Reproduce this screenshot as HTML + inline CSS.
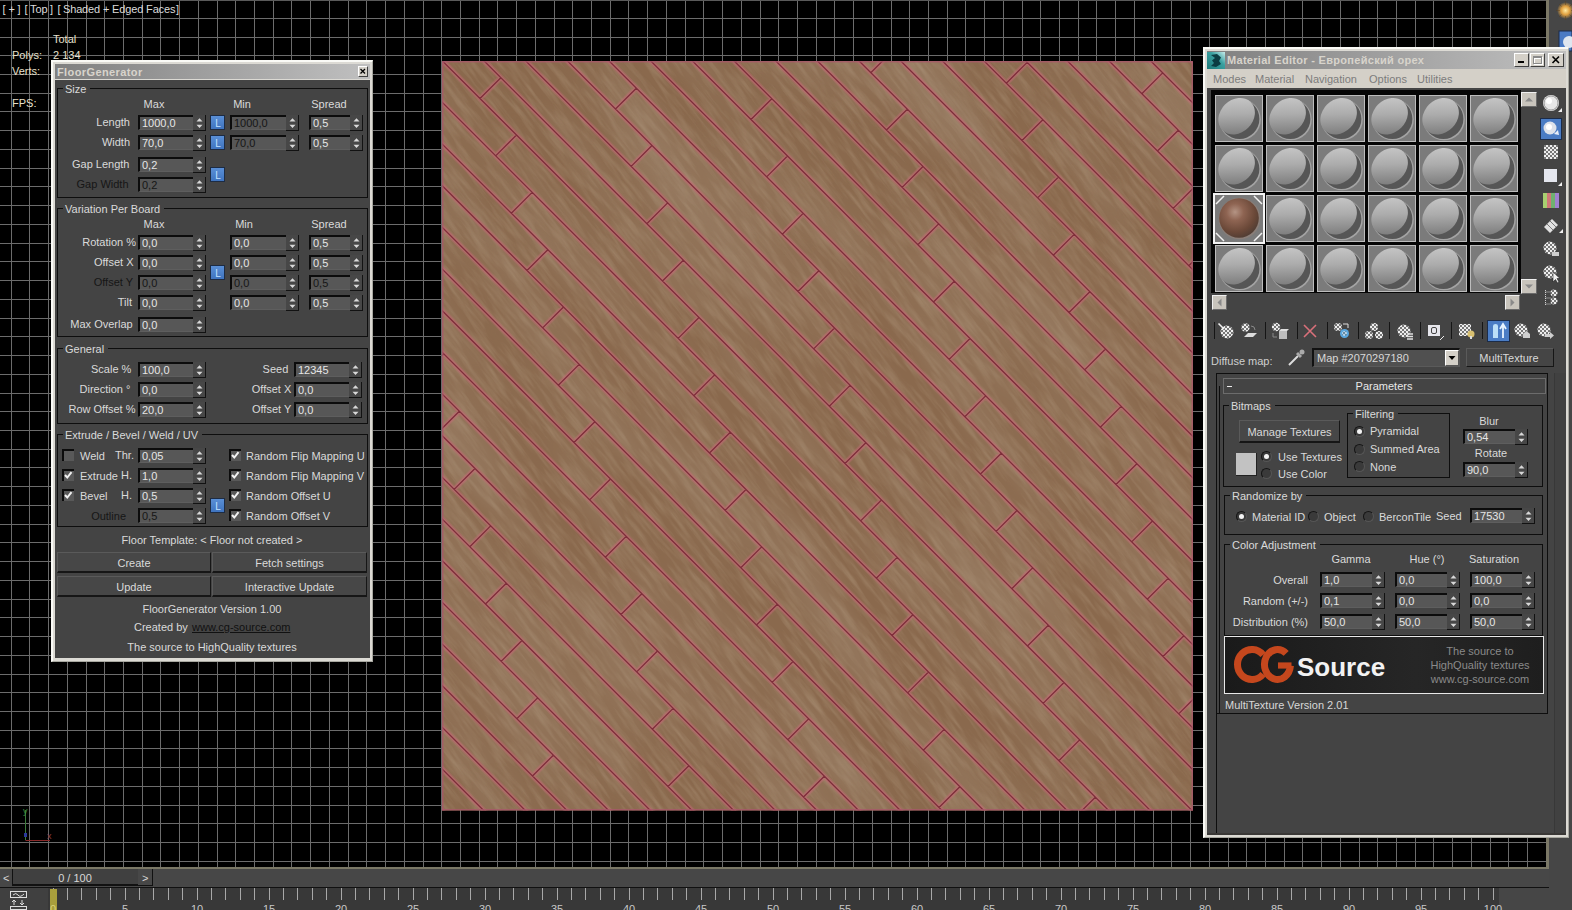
<!DOCTYPE html>
<html><head><meta charset="utf-8"><style>
html,body{margin:0;padding:0;}
body{width:1572px;height:910px;position:relative;overflow:hidden;background:#000;font-family:"Liberation Sans", sans-serif;}
body div{position:absolute;box-sizing:border-box;}
svg{position:absolute;}
</style></head><body>
<svg style="left:0;top:0" width="1546" height="867"><path d="M11.5 0V867M29.5 0V867M48.5 0V867M67.5 0V867M86.5 0V867M104.5 0V867M123.5 0V867M142.5 0V867M160.5 0V867M179.5 0V867M198.5 0V867M217.5 0V867M235.5 0V867M254.5 0V867M273.5 0V867M291.5 0V867M310.5 0V867M329.5 0V867M348.5 0V867M366.5 0V867M385.5 0V867M404.5 0V867M423.5 0V867M441.5 0V867M460.5 0V867M479.5 0V867M497.5 0V867M516.5 0V867M535.5 0V867M554.5 0V867M572.5 0V867M591.5 0V867M610.5 0V867M628.5 0V867M647.5 0V867M666.5 0V867M685.5 0V867M703.5 0V867M722.5 0V867M741.5 0V867M760.5 0V867M778.5 0V867M797.5 0V867M816.5 0V867M834.5 0V867M853.5 0V867M872.5 0V867M891.5 0V867M909.5 0V867M928.5 0V867M947.5 0V867M965.5 0V867M984.5 0V867M1003.5 0V867M1022.5 0V867M1040.5 0V867M1059.5 0V867M1078.5 0V867M1096.5 0V867M1115.5 0V867M1134.5 0V867M1153.5 0V867M1171.5 0V867M1190.5 0V867M1209.5 0V867M1228.5 0V867M1246.5 0V867M1265.5 0V867M1284.5 0V867M1302.5 0V867M1321.5 0V867M1340.5 0V867M1359.5 0V867M1377.5 0V867M1396.5 0V867M1415.5 0V867M1433.5 0V867M1452.5 0V867M1471.5 0V867M1490.5 0V867M1508.5 0V867M1527.5 0V867M0 18.5H1546M0 37.5H1546M0 55.5H1546M0 74.5H1546M0 93.5H1546M0 111.5H1546M0 130.5H1546M0 149.5H1546M0 168.5H1546M0 186.5H1546M0 205.5H1546M0 224.5H1546M0 243.5H1546M0 261.5H1546M0 280.5H1546M0 299.5H1546M0 318.5H1546M0 336.5H1546M0 355.5H1546M0 374.5H1546M0 393.5H1546M0 411.5H1546M0 430.5H1546M0 449.5H1546M0 467.5H1546M0 486.5H1546M0 505.5H1546M0 524.5H1546M0 542.5H1546M0 561.5H1546M0 580.5H1546M0 599.5H1546M0 617.5H1546M0 636.5H1546M0 655.5H1546M0 674.5H1546M0 692.5H1546M0 711.5H1546M0 730.5H1546M0 748.5H1546M0 767.5H1546M0 786.5H1546M0 805.5H1546M0 823.5H1546M0 842.5H1546M0 861.5H1546" stroke="#6c6c6c" stroke-width="1" shape-rendering="crispEdges" fill="none"/></svg><div style="left:0px;top:0px;width:1546px;height:1px;background:#5a5a5a"></div><div style="left:2.5px;top:2.19px;width:400px;height:14px;line-height:14px;font-size:11px;color:#dcdcdc;font-weight:normal;white-space:nowrap;">[</div><div style="left:8.5px;top:2.19px;width:400px;height:14px;line-height:14px;font-size:11px;color:#dcdcdc;font-weight:normal;white-space:nowrap;">+</div><div style="left:17.5px;top:2.19px;width:400px;height:14px;line-height:14px;font-size:11px;color:#dcdcdc;font-weight:normal;white-space:nowrap;">]</div><div style="left:24.5px;top:2.19px;width:400px;height:14px;line-height:14px;font-size:11px;color:#dcdcdc;font-weight:normal;white-space:nowrap;">[</div><div style="left:30px;top:2.19px;width:400px;height:14px;line-height:14px;font-size:11px;color:#dcdcdc;font-weight:normal;white-space:nowrap;">Top</div><div style="left:50px;top:2.19px;width:400px;height:14px;line-height:14px;font-size:11px;color:#dcdcdc;font-weight:normal;white-space:nowrap;">]</div><div style="left:57.5px;top:2.19px;width:400px;height:14px;line-height:14px;font-size:11px;color:#dcdcdc;font-weight:normal;white-space:nowrap;">[</div><div style="left:63px;top:2.19px;width:400px;height:14px;line-height:14px;font-size:11px;color:#dcdcdc;font-weight:normal;white-space:nowrap;letter-spacing:-0.15px;">Shaded + Edged Faces</div><div style="left:176px;top:2.19px;width:400px;height:14px;line-height:14px;font-size:11px;color:#dcdcdc;font-weight:normal;white-space:nowrap;">]</div><div style="left:53px;top:32.19px;width:400px;height:14px;line-height:14px;font-size:11px;color:#e8e0cc;font-weight:normal;white-space:nowrap;">Total</div><div style="left:12px;top:47.69px;width:400px;height:14px;line-height:14px;font-size:11px;color:#e8e0cc;font-weight:normal;white-space:nowrap;">Polys:</div><div style="left:53px;top:47.69px;width:400px;height:14px;line-height:14px;font-size:11px;color:#e8e0cc;font-weight:normal;white-space:nowrap;">2 134</div><div style="left:12px;top:63.69px;width:400px;height:14px;line-height:14px;font-size:11px;color:#e8e0cc;font-weight:normal;white-space:nowrap;">Verts:</div><div style="left:12px;top:96.19px;width:400px;height:14px;line-height:14px;font-size:11px;color:#e8e0cc;font-weight:normal;white-space:nowrap;">FPS:</div><svg style="left:18;top:800px" width="40" height="50"><path d="M7.5 10V40" stroke="#3a7a3a" stroke-width="1"/><path d="M7.5 40.5H32" stroke="#8a2a2a" stroke-width="1"/><rect x="6" y="33" width="3" height="4" fill="#2a3a9a"/></svg><div style="left:23px;top:806.38px;width:400px;height:11px;line-height:11px;font-size:9px;color:#3f8f3f;font-weight:normal;white-space:nowrap;">y</div><div style="left:47px;top:831.38px;width:400px;height:11px;line-height:11px;font-size:9px;color:#8f3f3f;font-weight:normal;white-space:nowrap;">x</div><svg style="left:442px;top:61px" width="751" height="749.5"><defs><clipPath id="sq"><rect x="0" y="0" width="751" height="749.5"/></clipPath><filter id="grain" x="0" y="0" width="100%" height="100%"><feTurbulence type="fractalNoise" baseFrequency="0.025 0.2" numOctaves="3" seed="7"/><feColorMatrix type="matrix" values="0 0 0 0 0.62  0 0 0 0 0.50  0 0 0 0 0.36  1.0 0 0 0 -0.40"/></filter><filter id="grain2" x="0" y="0" width="100%" height="100%"><feTurbulence type="fractalNoise" baseFrequency="0.004 0.02" numOctaves="2" seed="3"/><feColorMatrix type="matrix" values="0 0 0 0 0.42  0 0 0 0 0.32  0 0 0 0 0.23  1.4 0 0 0 -0.48"/></filter><filter id="lb" x="-5%" y="-5%" width="110%" height="110%"><feGaussianBlur stdDeviation="0.8"/></filter></defs><rect x="0" y="0" width="751" height="749.5" fill="#8a694d"/><g clip-path="url(#sq)"><g transform="rotate(52 375.5 374.75)"><rect x="-375.5" y="-374.75" width="1502" height="1499.0" filter="url(#grain)" opacity="0.55"/><rect x="-375.5" y="-374.75" width="1502" height="1499.0" filter="url(#grain2)" opacity="0.5"/></g><g><path d="M-20 -853.84L771 -62.84M-20 -812.17L771 -21.17M-20 -770.51L771 20.49M-20 -728.84L771 62.16M-20 -687.17L771 103.83M-20 -645.51L771 145.49M-20 -603.84L771 187.16M-20 -562.17L771 228.83M-20 -520.50L771 270.50M-20 -478.84L771 312.16M-20 -437.17L771 353.83M-20 -395.50L771 395.50M-20 -353.84L771 437.16M-20 -312.17L771 478.83M-20 -270.50L771 520.50M-20 -228.84L771 562.16M-20 -187.17L771 603.83M-20 -145.50L771 645.50M-20 -103.83L771 687.17M-20 -62.17L771 728.83M-20 -20.50L771 770.50M-20 21.17L771 812.17M-20 62.83L771 853.83M-20 104.50L771 895.50M-20 146.17L771 937.17M-20 187.84L771 978.84M-20 229.50L771 1020.50M-20 271.17L771 1062.17M-20 312.84L771 1103.84M-20 354.50L771 1145.50M-20 396.17L771 1187.17M-20 437.84L771 1228.84M-20 479.50L771 1270.50M-20 521.17L771 1312.17M-20 562.84L771 1353.84M-20 604.50L771 1395.51M-20 646.17L771 1437.17M-20 687.84L771 1478.84M-20 729.51L771 1520.51M-20 771.17L771 1562.17M-20 812.84L771 1603.84M126.98 751.52L106.14 772.36M111.32 694.18L90.48 715.02M95.65 636.85L74.81 657.69M79.98 579.52L59.14 600.36M64.32 522.18L43.48 543.02M246.82 704.68L225.98 725.52M48.65 464.85L27.81 485.69M231.15 647.35L210.31 668.19M32.98 407.51L12.14 428.36M215.49 590.01L194.65 610.85M17.32 350.18L-3.52 371.02M199.82 532.68L178.98 553.52M382.32 715.18L361.48 736.02M1.65 292.85L-19.19 313.69M184.15 475.35L163.31 496.19M366.65 657.85L345.81 678.69M168.49 418.01L147.65 438.85M350.99 600.51L330.15 621.35M152.82 360.68L131.98 381.52M335.32 543.18L314.48 564.02M517.82 725.68L496.98 746.52M137.15 303.35L116.31 324.19M319.65 485.85L298.81 506.69M502.15 668.35L481.31 689.19M121.49 246.01L100.65 266.85M303.99 428.51L283.15 449.35M486.49 611.01L465.65 631.85M105.82 188.68L84.98 209.52M288.32 371.18L267.48 392.02M470.82 553.68L449.98 574.52M653.32 736.18L632.48 757.02M90.15 131.35L69.31 152.19M272.65 313.85L251.81 334.69M455.15 496.35L434.31 517.19M637.65 678.85L616.81 699.69M74.49 74.01L53.65 94.85M256.99 256.51L236.15 277.35M439.49 439.01L418.65 459.85M621.99 621.51L601.15 642.35M58.82 16.68L37.98 37.52M241.32 199.18L220.48 220.02M423.82 381.68L402.98 402.52M606.32 564.18L585.48 585.02M225.65 141.85L204.81 162.69M408.15 324.35L387.31 345.19M590.65 506.85L569.81 527.69M773.15 689.35L752.31 710.19M209.99 84.51L189.15 105.35M392.49 267.01L371.65 287.85M574.99 449.51L554.15 470.35M757.49 632.01L736.65 652.85M194.32 27.18L173.48 48.02M376.82 209.68L355.98 230.52M559.32 392.18L538.48 413.02M741.82 574.68L720.98 595.52M361.15 152.35L340.31 173.19M543.65 334.85L522.81 355.69M726.15 517.35L705.31 538.19M345.49 95.01L324.65 115.85M527.99 277.51L507.15 298.35M710.49 460.01L689.65 480.85M329.82 37.68L308.98 58.52M512.32 220.18L491.48 241.02M694.82 402.68L673.98 423.52M314.15 -19.65L293.31 1.19M496.65 162.85L475.81 183.69M679.15 345.35L658.31 366.19M480.99 105.51L460.15 126.35M663.49 288.01L642.65 308.85M465.32 48.18L444.48 69.02M647.82 230.68L626.98 251.52M449.66 -9.16L428.81 11.68M632.16 173.34L611.32 194.18M616.49 116.01L595.65 136.85M600.82 58.68L579.98 79.52M585.16 1.34L564.32 22.18M767.66 183.84L746.82 204.68M751.99 126.51L731.15 147.35M736.32 69.18L715.48 90.02M720.66 11.84L699.82 32.68" stroke="#c46e76" stroke-width="6" opacity="0.3" fill="none"/><path d="M-20 -853.84L771 -62.84M-20 -812.17L771 -21.17M-20 -770.51L771 20.49M-20 -728.84L771 62.16M-20 -687.17L771 103.83M-20 -645.51L771 145.49M-20 -603.84L771 187.16M-20 -562.17L771 228.83M-20 -520.50L771 270.50M-20 -478.84L771 312.16M-20 -437.17L771 353.83M-20 -395.50L771 395.50M-20 -353.84L771 437.16M-20 -312.17L771 478.83M-20 -270.50L771 520.50M-20 -228.84L771 562.16M-20 -187.17L771 603.83M-20 -145.50L771 645.50M-20 -103.83L771 687.17M-20 -62.17L771 728.83M-20 -20.50L771 770.50M-20 21.17L771 812.17M-20 62.83L771 853.83M-20 104.50L771 895.50M-20 146.17L771 937.17M-20 187.84L771 978.84M-20 229.50L771 1020.50M-20 271.17L771 1062.17M-20 312.84L771 1103.84M-20 354.50L771 1145.50M-20 396.17L771 1187.17M-20 437.84L771 1228.84M-20 479.50L771 1270.50M-20 521.17L771 1312.17M-20 562.84L771 1353.84M-20 604.50L771 1395.51M-20 646.17L771 1437.17M-20 687.84L771 1478.84M-20 729.51L771 1520.51M-20 771.17L771 1562.17M-20 812.84L771 1603.84M126.98 751.52L106.14 772.36M111.32 694.18L90.48 715.02M95.65 636.85L74.81 657.69M79.98 579.52L59.14 600.36M64.32 522.18L43.48 543.02M246.82 704.68L225.98 725.52M48.65 464.85L27.81 485.69M231.15 647.35L210.31 668.19M32.98 407.51L12.14 428.36M215.49 590.01L194.65 610.85M17.32 350.18L-3.52 371.02M199.82 532.68L178.98 553.52M382.32 715.18L361.48 736.02M1.65 292.85L-19.19 313.69M184.15 475.35L163.31 496.19M366.65 657.85L345.81 678.69M168.49 418.01L147.65 438.85M350.99 600.51L330.15 621.35M152.82 360.68L131.98 381.52M335.32 543.18L314.48 564.02M517.82 725.68L496.98 746.52M137.15 303.35L116.31 324.19M319.65 485.85L298.81 506.69M502.15 668.35L481.31 689.19M121.49 246.01L100.65 266.85M303.99 428.51L283.15 449.35M486.49 611.01L465.65 631.85M105.82 188.68L84.98 209.52M288.32 371.18L267.48 392.02M470.82 553.68L449.98 574.52M653.32 736.18L632.48 757.02M90.15 131.35L69.31 152.19M272.65 313.85L251.81 334.69M455.15 496.35L434.31 517.19M637.65 678.85L616.81 699.69M74.49 74.01L53.65 94.85M256.99 256.51L236.15 277.35M439.49 439.01L418.65 459.85M621.99 621.51L601.15 642.35M58.82 16.68L37.98 37.52M241.32 199.18L220.48 220.02M423.82 381.68L402.98 402.52M606.32 564.18L585.48 585.02M225.65 141.85L204.81 162.69M408.15 324.35L387.31 345.19M590.65 506.85L569.81 527.69M773.15 689.35L752.31 710.19M209.99 84.51L189.15 105.35M392.49 267.01L371.65 287.85M574.99 449.51L554.15 470.35M757.49 632.01L736.65 652.85M194.32 27.18L173.48 48.02M376.82 209.68L355.98 230.52M559.32 392.18L538.48 413.02M741.82 574.68L720.98 595.52M361.15 152.35L340.31 173.19M543.65 334.85L522.81 355.69M726.15 517.35L705.31 538.19M345.49 95.01L324.65 115.85M527.99 277.51L507.15 298.35M710.49 460.01L689.65 480.85M329.82 37.68L308.98 58.52M512.32 220.18L491.48 241.02M694.82 402.68L673.98 423.52M314.15 -19.65L293.31 1.19M496.65 162.85L475.81 183.69M679.15 345.35L658.31 366.19M480.99 105.51L460.15 126.35M663.49 288.01L642.65 308.85M465.32 48.18L444.48 69.02M647.82 230.68L626.98 251.52M449.66 -9.16L428.81 11.68M632.16 173.34L611.32 194.18M616.49 116.01L595.65 136.85M600.82 58.68L579.98 79.52M585.16 1.34L564.32 22.18M767.66 183.84L746.82 204.68M751.99 126.51L731.15 147.35M736.32 69.18L715.48 90.02M720.66 11.84L699.82 32.68" stroke="#c06a74" stroke-width="3.6" opacity="0.58" fill="none"/><path d="M-20 -853.84L771 -62.84M-20 -812.17L771 -21.17M-20 -770.51L771 20.49M-20 -728.84L771 62.16M-20 -687.17L771 103.83M-20 -645.51L771 145.49M-20 -603.84L771 187.16M-20 -562.17L771 228.83M-20 -520.50L771 270.50M-20 -478.84L771 312.16M-20 -437.17L771 353.83M-20 -395.50L771 395.50M-20 -353.84L771 437.16M-20 -312.17L771 478.83M-20 -270.50L771 520.50M-20 -228.84L771 562.16M-20 -187.17L771 603.83M-20 -145.50L771 645.50M-20 -103.83L771 687.17M-20 -62.17L771 728.83M-20 -20.50L771 770.50M-20 21.17L771 812.17M-20 62.83L771 853.83M-20 104.50L771 895.50M-20 146.17L771 937.17M-20 187.84L771 978.84M-20 229.50L771 1020.50M-20 271.17L771 1062.17M-20 312.84L771 1103.84M-20 354.50L771 1145.50M-20 396.17L771 1187.17M-20 437.84L771 1228.84M-20 479.50L771 1270.50M-20 521.17L771 1312.17M-20 562.84L771 1353.84M-20 604.50L771 1395.51M-20 646.17L771 1437.17M-20 687.84L771 1478.84M-20 729.51L771 1520.51M-20 771.17L771 1562.17M-20 812.84L771 1603.84M126.98 751.52L106.14 772.36M111.32 694.18L90.48 715.02M95.65 636.85L74.81 657.69M79.98 579.52L59.14 600.36M64.32 522.18L43.48 543.02M246.82 704.68L225.98 725.52M48.65 464.85L27.81 485.69M231.15 647.35L210.31 668.19M32.98 407.51L12.14 428.36M215.49 590.01L194.65 610.85M17.32 350.18L-3.52 371.02M199.82 532.68L178.98 553.52M382.32 715.18L361.48 736.02M1.65 292.85L-19.19 313.69M184.15 475.35L163.31 496.19M366.65 657.85L345.81 678.69M168.49 418.01L147.65 438.85M350.99 600.51L330.15 621.35M152.82 360.68L131.98 381.52M335.32 543.18L314.48 564.02M517.82 725.68L496.98 746.52M137.15 303.35L116.31 324.19M319.65 485.85L298.81 506.69M502.15 668.35L481.31 689.19M121.49 246.01L100.65 266.85M303.99 428.51L283.15 449.35M486.49 611.01L465.65 631.85M105.82 188.68L84.98 209.52M288.32 371.18L267.48 392.02M470.82 553.68L449.98 574.52M653.32 736.18L632.48 757.02M90.15 131.35L69.31 152.19M272.65 313.85L251.81 334.69M455.15 496.35L434.31 517.19M637.65 678.85L616.81 699.69M74.49 74.01L53.65 94.85M256.99 256.51L236.15 277.35M439.49 439.01L418.65 459.85M621.99 621.51L601.15 642.35M58.82 16.68L37.98 37.52M241.32 199.18L220.48 220.02M423.82 381.68L402.98 402.52M606.32 564.18L585.48 585.02M225.65 141.85L204.81 162.69M408.15 324.35L387.31 345.19M590.65 506.85L569.81 527.69M773.15 689.35L752.31 710.19M209.99 84.51L189.15 105.35M392.49 267.01L371.65 287.85M574.99 449.51L554.15 470.35M757.49 632.01L736.65 652.85M194.32 27.18L173.48 48.02M376.82 209.68L355.98 230.52M559.32 392.18L538.48 413.02M741.82 574.68L720.98 595.52M361.15 152.35L340.31 173.19M543.65 334.85L522.81 355.69M726.15 517.35L705.31 538.19M345.49 95.01L324.65 115.85M527.99 277.51L507.15 298.35M710.49 460.01L689.65 480.85M329.82 37.68L308.98 58.52M512.32 220.18L491.48 241.02M694.82 402.68L673.98 423.52M314.15 -19.65L293.31 1.19M496.65 162.85L475.81 183.69M679.15 345.35L658.31 366.19M480.99 105.51L460.15 126.35M663.49 288.01L642.65 308.85M465.32 48.18L444.48 69.02M647.82 230.68L626.98 251.52M449.66 -9.16L428.81 11.68M632.16 173.34L611.32 194.18M616.49 116.01L595.65 136.85M600.82 58.68L579.98 79.52M585.16 1.34L564.32 22.18M767.66 183.84L746.82 204.68M751.99 126.51L731.15 147.35M736.32 69.18L715.48 90.02M720.66 11.84L699.82 32.68" stroke="#7e2e3a" stroke-width="1.3" fill="none"/></g></g><rect x="0.75" y="0.75" width="749.5" height="748.0" fill="none" stroke="#a8586a" stroke-width="1.5" opacity="0.8"/></svg><div style="left:1546px;top:0px;width:3px;height:869px;background:#7b7866"></div><div style="left:0px;top:867px;width:1549px;height:2px;background:#7b7866"></div><div style="left:1549px;top:0px;width:23px;height:888px;background:#464646"></div><svg style="left:1549px;top:0" width="23" height="60"><defs><radialGradient id="sun"><stop offset="0" stop-color="#ffe9a0"/><stop offset="0.5" stop-color="#e0a040"/><stop offset="1" stop-color="#e0a040" stop-opacity="0"/></radialGradient></defs><circle cx="16.5" cy="10.5" r="8.5" fill="url(#sun)"/><path d="M16.5 1V5M16.5 16V20M7 10.5H11M22 10.5H26M10 4L12.5 6.5M20.5 14.5L23 17M23 4L20.5 6.5M12.5 14.5L10 17" stroke="#5a4020" stroke-width="0.8" opacity="0.6"/><rect x="10" y="31" width="13" height="20" fill="#4a7ac4" stroke="#1a2a4a"/><circle cx="20" cy="42" r="6" fill="#dfe6ef"/></svg><div style="left:0px;top:869px;width:1549px;height:19px;background:#474747"></div><div style="left:12px;top:869px;width:1px;height:17px;background:#111"></div><div style="left:13px;top:869px;width:125px;height:16px;background:#404040"></div><div style="left:13px;top:884px;width:125px;height:2px;background:#111"></div><div style="left:138px;top:869px;width:15px;height:17px;background:#474747;border-right:1px solid #111;border-bottom:1px solid #111"></div><div style="left:3px;top:871.19px;width:400px;height:14px;line-height:14px;font-size:11px;color:#d8d8d8;font-weight:normal;white-space:nowrap;">&lt;</div><div style="left:15.0px;top:871.19px;width:120px;height:14px;line-height:14px;font-size:11px;color:#d8d8d8;font-weight:normal;white-space:nowrap;text-align:center;">0 / 100</div><div style="left:142px;top:871.19px;width:400px;height:14px;line-height:14px;font-size:11px;color:#d8d8d8;font-weight:normal;white-space:nowrap;">&gt;</div><div style="left:0px;top:887px;width:1549px;height:1px;background:#111"></div><div style="left:0px;top:888px;width:1572px;height:22px;background:#464646"></div><div style="left:0px;top:888px;width:48px;height:22px;background:#404040"></div><div style="left:48px;top:888px;width:1451px;height:22px;background:#383838"></div><svg style="left:0;top:0" width="1572" height="910"><path d="M53.5 888V900M67.5 888V900M81.5 888V900M96.5 888V900M110.5 888V900M125.5 888V900M139.5 888V900M153.5 888V900M168.5 888V900M182.5 888V900M197.5 888V900M211.5 888V900M225.5 888V900M240.5 888V900M254.5 888V900M269.5 888V900M283.5 888V900M297.5 888V900M312.5 888V900M326.5 888V900M341.5 888V900M355.5 888V900M369.5 888V900M384.5 888V900M398.5 888V900M413.5 888V900M427.5 888V900M441.5 888V900M456.5 888V900M470.5 888V900M485.5 888V900M499.5 888V900M513.5 888V900M528.5 888V900M542.5 888V900M557.5 888V900M571.5 888V900M585.5 888V900M600.5 888V900M614.5 888V900M629.5 888V900M643.5 888V900M657.5 888V900M672.5 888V900M686.5 888V900M701.5 888V900M715.5 888V900M729.5 888V900M744.5 888V900M758.5 888V900M773.5 888V900M787.5 888V900M801.5 888V900M816.5 888V900M830.5 888V900M845.5 888V900M859.5 888V900M873.5 888V900M888.5 888V900M902.5 888V900M917.5 888V900M931.5 888V900M945.5 888V900M960.5 888V900M974.5 888V900M989.5 888V900M1003.5 888V900M1017.5 888V900M1032.5 888V900M1046.5 888V900M1061.5 888V900M1075.5 888V900M1089.5 888V900M1104.5 888V900M1118.5 888V900M1133.5 888V900M1147.5 888V900M1161.5 888V900M1176.5 888V900M1190.5 888V900M1205.5 888V900M1219.5 888V900M1233.5 888V900M1248.5 888V900M1262.5 888V900M1277.5 888V900M1291.5 888V900M1305.5 888V900M1320.5 888V900M1334.5 888V900M1349.5 888V900M1363.5 888V900M1377.5 888V900M1392.5 888V900M1406.5 888V900M1421.5 888V900M1435.5 888V900M1449.5 888V900M1464.5 888V900M1478.5 888V900M1493.5 888V900" stroke="#a8a8a8" stroke-width="1" shape-rendering="crispEdges"/></svg><div style="left:50px;top:889px;width:7px;height:21px;background:#a89e3c"></div><div style="left:33.0px;top:902.19px;width:40px;height:14px;line-height:14px;font-size:11px;color:#d8d27a;font-weight:normal;white-space:nowrap;text-align:center;">0</div><div style="left:105.0px;top:902.19px;width:40px;height:14px;line-height:14px;font-size:11px;color:#c8c8c8;font-weight:normal;white-space:nowrap;text-align:center;">5</div><div style="left:177.0px;top:902.19px;width:40px;height:14px;line-height:14px;font-size:11px;color:#c8c8c8;font-weight:normal;white-space:nowrap;text-align:center;">10</div><div style="left:249.0px;top:902.19px;width:40px;height:14px;line-height:14px;font-size:11px;color:#c8c8c8;font-weight:normal;white-space:nowrap;text-align:center;">15</div><div style="left:321.0px;top:902.19px;width:40px;height:14px;line-height:14px;font-size:11px;color:#c8c8c8;font-weight:normal;white-space:nowrap;text-align:center;">20</div><div style="left:393.0px;top:902.19px;width:40px;height:14px;line-height:14px;font-size:11px;color:#c8c8c8;font-weight:normal;white-space:nowrap;text-align:center;">25</div><div style="left:465.0px;top:902.19px;width:40px;height:14px;line-height:14px;font-size:11px;color:#c8c8c8;font-weight:normal;white-space:nowrap;text-align:center;">30</div><div style="left:537.0px;top:902.19px;width:40px;height:14px;line-height:14px;font-size:11px;color:#c8c8c8;font-weight:normal;white-space:nowrap;text-align:center;">35</div><div style="left:609.0px;top:902.19px;width:40px;height:14px;line-height:14px;font-size:11px;color:#c8c8c8;font-weight:normal;white-space:nowrap;text-align:center;">40</div><div style="left:681.0px;top:902.19px;width:40px;height:14px;line-height:14px;font-size:11px;color:#c8c8c8;font-weight:normal;white-space:nowrap;text-align:center;">45</div><div style="left:753.0px;top:902.19px;width:40px;height:14px;line-height:14px;font-size:11px;color:#c8c8c8;font-weight:normal;white-space:nowrap;text-align:center;">50</div><div style="left:825.0px;top:902.19px;width:40px;height:14px;line-height:14px;font-size:11px;color:#c8c8c8;font-weight:normal;white-space:nowrap;text-align:center;">55</div><div style="left:897.0px;top:902.19px;width:40px;height:14px;line-height:14px;font-size:11px;color:#c8c8c8;font-weight:normal;white-space:nowrap;text-align:center;">60</div><div style="left:969.0px;top:902.19px;width:40px;height:14px;line-height:14px;font-size:11px;color:#c8c8c8;font-weight:normal;white-space:nowrap;text-align:center;">65</div><div style="left:1041.0px;top:902.19px;width:40px;height:14px;line-height:14px;font-size:11px;color:#c8c8c8;font-weight:normal;white-space:nowrap;text-align:center;">70</div><div style="left:1113.0px;top:902.19px;width:40px;height:14px;line-height:14px;font-size:11px;color:#c8c8c8;font-weight:normal;white-space:nowrap;text-align:center;">75</div><div style="left:1185.0px;top:902.19px;width:40px;height:14px;line-height:14px;font-size:11px;color:#c8c8c8;font-weight:normal;white-space:nowrap;text-align:center;">80</div><div style="left:1257.0px;top:902.19px;width:40px;height:14px;line-height:14px;font-size:11px;color:#c8c8c8;font-weight:normal;white-space:nowrap;text-align:center;">85</div><div style="left:1329.0px;top:902.19px;width:40px;height:14px;line-height:14px;font-size:11px;color:#c8c8c8;font-weight:normal;white-space:nowrap;text-align:center;">90</div><div style="left:1401.0px;top:902.19px;width:40px;height:14px;line-height:14px;font-size:11px;color:#c8c8c8;font-weight:normal;white-space:nowrap;text-align:center;">95</div><div style="left:1473.0px;top:902.19px;width:40px;height:14px;line-height:14px;font-size:11px;color:#c8c8c8;font-weight:normal;white-space:nowrap;text-align:center;">100</div><svg style="left:9px;top:891px" width="20" height="19"><rect x="1.5" y="0.5" width="16" height="6" fill="none" stroke="#ddd"/><path d="M4 4 Q7 1 9 4 T15 3" stroke="#ddd" fill="none"/><path d="M5 14V9M3 11L5 9L7 11M13 9V14M11 12L13 14L15 12" stroke="#ddd" fill="none"/><rect x="1.5" y="15.5" width="16" height="3" fill="none" stroke="#ddd"/></svg><div style="left:51px;top:60px;width:322px;height:602px;background:#dcdad4;border-top:2px solid #fafaf6;border-left:2px solid #fafaf6;border-right:1px solid #a8a8a0;border-bottom:1px solid #a8a8a0"></div><div style="left:55px;top:64px;width:315px;height:15px;background:linear-gradient(90deg,#808080,#c0c0c0)"></div><div style="left:57px;top:64.69px;width:400px;height:14px;line-height:14px;font-size:11px;color:#d8d4cc;font-weight:bold;white-space:nowrap;letter-spacing:0.4px;">FloorGenerator</div><div style="left:358px;top:66px;width:10px;height:11px;background:#d4d0c8;border-top:1px solid #fff;border-left:1px solid #fff;border-right:1px solid #404040;border-bottom:1px solid #404040"></div><svg style="left:358px;top:66px" width="10" height="11"><path d="M2.5 3L7 7.5M7 3L2.5 7.5" stroke="#000" stroke-width="1.3"/></svg><div style="left:55px;top:80px;width:315px;height:578px;background:#444444"></div><div style="left:57px;top:88px;width:311px;height:110px;border:1px solid #0e0e0e"></div><div style="left:63px;top:86px;width:27.40625px;height:5px;background:#444444"></div><div style="left:65px;top:81.69px;width:400px;height:14px;line-height:14px;font-size:11px;color:#dadada;font-weight:normal;white-space:nowrap;">Size</div><div style="left:124.0px;top:97.19px;width:60px;height:14px;line-height:14px;font-size:11px;color:#dadada;font-weight:normal;white-space:nowrap;text-align:center;">Max</div><div style="left:212.0px;top:97.19px;width:60px;height:14px;line-height:14px;font-size:11px;color:#dadada;font-weight:normal;white-space:nowrap;text-align:center;">Min</div><div style="left:299.0px;top:97.19px;width:60px;height:14px;line-height:14px;font-size:11px;color:#dadada;font-weight:normal;white-space:nowrap;text-align:center;">Spread</div><div style="left:30px;top:115.19px;width:100px;height:14px;line-height:14px;font-size:11px;color:#dadada;font-weight:normal;white-space:nowrap;text-align:right;">Length</div><div style="left:138px;top:115px;width:55px;height:15px;background:#575757;border-top:2px solid #0c0c0c;border-left:2px solid #0c0c0c;border-bottom:1px solid #5e5e5e"></div><div style="left:193px;top:115px;width:13px;height:16px;background:#474747;border-right:1px solid #121212;border-bottom:1px solid #121212"></div><svg style="left:193px;top:115px" width="13" height="16"><path d="M3.5 6.4L6.5 3.2L9.5 6.4ZM3.5 9.8L6.5 13L9.5 9.8Z" fill="#d8d8d8"/></svg><div style="left:142px;top:116.19px;width:400px;height:14px;line-height:14px;font-size:11px;color:#e6e6e6;font-weight:normal;white-space:nowrap;">1000,0</div><div style="left:210px;top:115px;width:15px;height:15px;background:linear-gradient(#5a8fd6,#3f74bf);border:1px solid #1d2c44"></div><div style="left:208.0px;top:118.03px;width:20px;height:12px;line-height:12px;font-size:10px;color:#c4e2ff;font-weight:normal;white-space:nowrap;text-align:center;">L</div><div style="left:230px;top:115px;width:56px;height:15px;background:#575757;border-top:2px solid #0c0c0c;border-left:2px solid #0c0c0c;border-bottom:1px solid #5e5e5e"></div><div style="left:286px;top:115px;width:13px;height:16px;background:#474747;border-right:1px solid #121212;border-bottom:1px solid #121212"></div><svg style="left:286px;top:115px" width="13" height="16"><path d="M3.5 6.4L6.5 3.2L9.5 6.4ZM3.5 9.8L6.5 13L9.5 9.8Z" fill="#d8d8d8"/></svg><div style="left:234px;top:116.19px;width:400px;height:14px;line-height:14px;font-size:11px;color:#161616;font-weight:normal;white-space:nowrap;">1000,0</div><div style="left:309px;top:115px;width:41px;height:15px;background:#575757;border-top:2px solid #0c0c0c;border-left:2px solid #0c0c0c;border-bottom:1px solid #5e5e5e"></div><div style="left:350px;top:115px;width:13px;height:16px;background:#474747;border-right:1px solid #121212;border-bottom:1px solid #121212"></div><svg style="left:350px;top:115px" width="13" height="16"><path d="M3.5 6.4L6.5 3.2L9.5 6.4ZM3.5 9.8L6.5 13L9.5 9.8Z" fill="#d8d8d8"/></svg><div style="left:313px;top:116.19px;width:400px;height:14px;line-height:14px;font-size:11px;color:#e6e6e6;font-weight:normal;white-space:nowrap;">0,5</div><div style="left:30px;top:135.19px;width:100px;height:14px;line-height:14px;font-size:11px;color:#dadada;font-weight:normal;white-space:nowrap;text-align:right;">Width</div><div style="left:138px;top:135px;width:55px;height:15px;background:#575757;border-top:2px solid #0c0c0c;border-left:2px solid #0c0c0c;border-bottom:1px solid #5e5e5e"></div><div style="left:193px;top:135px;width:13px;height:16px;background:#474747;border-right:1px solid #121212;border-bottom:1px solid #121212"></div><svg style="left:193px;top:135px" width="13" height="16"><path d="M3.5 6.4L6.5 3.2L9.5 6.4ZM3.5 9.8L6.5 13L9.5 9.8Z" fill="#d8d8d8"/></svg><div style="left:142px;top:136.19px;width:400px;height:14px;line-height:14px;font-size:11px;color:#e6e6e6;font-weight:normal;white-space:nowrap;">70,0</div><div style="left:210px;top:135px;width:15px;height:15px;background:linear-gradient(#5a8fd6,#3f74bf);border:1px solid #1d2c44"></div><div style="left:208.0px;top:138.03px;width:20px;height:12px;line-height:12px;font-size:10px;color:#c4e2ff;font-weight:normal;white-space:nowrap;text-align:center;">L</div><div style="left:230px;top:135px;width:56px;height:15px;background:#575757;border-top:2px solid #0c0c0c;border-left:2px solid #0c0c0c;border-bottom:1px solid #5e5e5e"></div><div style="left:286px;top:135px;width:13px;height:16px;background:#474747;border-right:1px solid #121212;border-bottom:1px solid #121212"></div><svg style="left:286px;top:135px" width="13" height="16"><path d="M3.5 6.4L6.5 3.2L9.5 6.4ZM3.5 9.8L6.5 13L9.5 9.8Z" fill="#d8d8d8"/></svg><div style="left:234px;top:136.19px;width:400px;height:14px;line-height:14px;font-size:11px;color:#161616;font-weight:normal;white-space:nowrap;">70,0</div><div style="left:309px;top:135px;width:41px;height:15px;background:#575757;border-top:2px solid #0c0c0c;border-left:2px solid #0c0c0c;border-bottom:1px solid #5e5e5e"></div><div style="left:350px;top:135px;width:13px;height:16px;background:#474747;border-right:1px solid #121212;border-bottom:1px solid #121212"></div><svg style="left:350px;top:135px" width="13" height="16"><path d="M3.5 6.4L6.5 3.2L9.5 6.4ZM3.5 9.8L6.5 13L9.5 9.8Z" fill="#d8d8d8"/></svg><div style="left:313px;top:136.19px;width:400px;height:14px;line-height:14px;font-size:11px;color:#e6e6e6;font-weight:normal;white-space:nowrap;">0,5</div><div style="left:29.5px;top:157.19px;width:100px;height:14px;line-height:14px;font-size:11px;color:#dadada;font-weight:normal;white-space:nowrap;text-align:right;">Gap Length</div><div style="left:138px;top:157px;width:55px;height:15px;background:#575757;border-top:2px solid #0c0c0c;border-left:2px solid #0c0c0c;border-bottom:1px solid #5e5e5e"></div><div style="left:193px;top:157px;width:13px;height:16px;background:#474747;border-right:1px solid #121212;border-bottom:1px solid #121212"></div><svg style="left:193px;top:157px" width="13" height="16"><path d="M3.5 6.4L6.5 3.2L9.5 6.4ZM3.5 9.8L6.5 13L9.5 9.8Z" fill="#d8d8d8"/></svg><div style="left:142px;top:158.19px;width:400px;height:14px;line-height:14px;font-size:11px;color:#e6e6e6;font-weight:normal;white-space:nowrap;">0,2</div><div style="left:28.5px;top:177.19px;width:100px;height:14px;line-height:14px;font-size:11px;color:#161616;font-weight:normal;white-space:nowrap;text-align:right;">Gap Width</div><div style="left:138px;top:177px;width:55px;height:15px;background:#575757;border-top:2px solid #0c0c0c;border-left:2px solid #0c0c0c;border-bottom:1px solid #5e5e5e"></div><div style="left:193px;top:177px;width:13px;height:16px;background:#474747;border-right:1px solid #121212;border-bottom:1px solid #121212"></div><svg style="left:193px;top:177px" width="13" height="16"><path d="M3.5 6.4L6.5 3.2L9.5 6.4ZM3.5 9.8L6.5 13L9.5 9.8Z" fill="#d8d8d8"/></svg><div style="left:142px;top:178.19px;width:400px;height:14px;line-height:14px;font-size:11px;color:#161616;font-weight:normal;white-space:nowrap;">0,2</div><div style="left:210px;top:167px;width:15px;height:15px;background:linear-gradient(#5a8fd6,#3f74bf);border:1px solid #1d2c44"></div><div style="left:208.0px;top:170.03px;width:20px;height:12px;line-height:12px;font-size:10px;color:#c4e2ff;font-weight:normal;white-space:nowrap;text-align:center;">L</div><div style="left:57px;top:208px;width:311px;height:129px;border:1px solid #0e0e0e"></div><div style="left:63px;top:206px;width:101.25px;height:5px;background:#444444"></div><div style="left:65px;top:201.69px;width:400px;height:14px;line-height:14px;font-size:11px;color:#dadada;font-weight:normal;white-space:nowrap;">Variation Per Board</div><div style="left:124.0px;top:217.19px;width:60px;height:14px;line-height:14px;font-size:11px;color:#dadada;font-weight:normal;white-space:nowrap;text-align:center;">Max</div><div style="left:214.0px;top:217.19px;width:60px;height:14px;line-height:14px;font-size:11px;color:#dadada;font-weight:normal;white-space:nowrap;text-align:center;">Min</div><div style="left:299.0px;top:217.19px;width:60px;height:14px;line-height:14px;font-size:11px;color:#dadada;font-weight:normal;white-space:nowrap;text-align:center;">Spread</div><div style="left:36px;top:235.19px;width:100px;height:14px;line-height:14px;font-size:11px;color:#dadada;font-weight:normal;white-space:nowrap;text-align:right;">Rotation %</div><div style="left:138px;top:235px;width:55px;height:15px;background:#575757;border-top:2px solid #0c0c0c;border-left:2px solid #0c0c0c;border-bottom:1px solid #5e5e5e"></div><div style="left:193px;top:235px;width:13px;height:16px;background:#474747;border-right:1px solid #121212;border-bottom:1px solid #121212"></div><svg style="left:193px;top:235px" width="13" height="16"><path d="M3.5 6.4L6.5 3.2L9.5 6.4ZM3.5 9.8L6.5 13L9.5 9.8Z" fill="#d8d8d8"/></svg><div style="left:142px;top:236.19px;width:400px;height:14px;line-height:14px;font-size:11px;color:#e6e6e6;font-weight:normal;white-space:nowrap;">0,0</div><div style="left:230px;top:235px;width:56px;height:15px;background:#575757;border-top:2px solid #0c0c0c;border-left:2px solid #0c0c0c;border-bottom:1px solid #5e5e5e"></div><div style="left:286px;top:235px;width:13px;height:16px;background:#474747;border-right:1px solid #121212;border-bottom:1px solid #121212"></div><svg style="left:286px;top:235px" width="13" height="16"><path d="M3.5 6.4L6.5 3.2L9.5 6.4ZM3.5 9.8L6.5 13L9.5 9.8Z" fill="#d8d8d8"/></svg><div style="left:234px;top:236.19px;width:400px;height:14px;line-height:14px;font-size:11px;color:#e6e6e6;font-weight:normal;white-space:nowrap;">0,0</div><div style="left:309px;top:235px;width:41px;height:15px;background:#575757;border-top:2px solid #0c0c0c;border-left:2px solid #0c0c0c;border-bottom:1px solid #5e5e5e"></div><div style="left:350px;top:235px;width:13px;height:16px;background:#474747;border-right:1px solid #121212;border-bottom:1px solid #121212"></div><svg style="left:350px;top:235px" width="13" height="16"><path d="M3.5 6.4L6.5 3.2L9.5 6.4ZM3.5 9.8L6.5 13L9.5 9.8Z" fill="#d8d8d8"/></svg><div style="left:313px;top:236.19px;width:400px;height:14px;line-height:14px;font-size:11px;color:#e6e6e6;font-weight:normal;white-space:nowrap;">0,5</div><div style="left:33.5px;top:255.19px;width:100px;height:14px;line-height:14px;font-size:11px;color:#dadada;font-weight:normal;white-space:nowrap;text-align:right;">Offset X</div><div style="left:138px;top:255px;width:55px;height:15px;background:#575757;border-top:2px solid #0c0c0c;border-left:2px solid #0c0c0c;border-bottom:1px solid #5e5e5e"></div><div style="left:193px;top:255px;width:13px;height:16px;background:#474747;border-right:1px solid #121212;border-bottom:1px solid #121212"></div><svg style="left:193px;top:255px" width="13" height="16"><path d="M3.5 6.4L6.5 3.2L9.5 6.4ZM3.5 9.8L6.5 13L9.5 9.8Z" fill="#d8d8d8"/></svg><div style="left:142px;top:256.19px;width:400px;height:14px;line-height:14px;font-size:11px;color:#e6e6e6;font-weight:normal;white-space:nowrap;">0,0</div><div style="left:230px;top:255px;width:56px;height:15px;background:#575757;border-top:2px solid #0c0c0c;border-left:2px solid #0c0c0c;border-bottom:1px solid #5e5e5e"></div><div style="left:286px;top:255px;width:13px;height:16px;background:#474747;border-right:1px solid #121212;border-bottom:1px solid #121212"></div><svg style="left:286px;top:255px" width="13" height="16"><path d="M3.5 6.4L6.5 3.2L9.5 6.4ZM3.5 9.8L6.5 13L9.5 9.8Z" fill="#d8d8d8"/></svg><div style="left:234px;top:256.19px;width:400px;height:14px;line-height:14px;font-size:11px;color:#e6e6e6;font-weight:normal;white-space:nowrap;">0,0</div><div style="left:309px;top:255px;width:41px;height:15px;background:#575757;border-top:2px solid #0c0c0c;border-left:2px solid #0c0c0c;border-bottom:1px solid #5e5e5e"></div><div style="left:350px;top:255px;width:13px;height:16px;background:#474747;border-right:1px solid #121212;border-bottom:1px solid #121212"></div><svg style="left:350px;top:255px" width="13" height="16"><path d="M3.5 6.4L6.5 3.2L9.5 6.4ZM3.5 9.8L6.5 13L9.5 9.8Z" fill="#d8d8d8"/></svg><div style="left:313px;top:256.19px;width:400px;height:14px;line-height:14px;font-size:11px;color:#e6e6e6;font-weight:normal;white-space:nowrap;">0,5</div><div style="left:33px;top:275.19px;width:100px;height:14px;line-height:14px;font-size:11px;color:#161616;font-weight:normal;white-space:nowrap;text-align:right;">Offset Y</div><div style="left:138px;top:275px;width:55px;height:15px;background:#575757;border-top:2px solid #0c0c0c;border-left:2px solid #0c0c0c;border-bottom:1px solid #5e5e5e"></div><div style="left:193px;top:275px;width:13px;height:16px;background:#474747;border-right:1px solid #121212;border-bottom:1px solid #121212"></div><svg style="left:193px;top:275px" width="13" height="16"><path d="M3.5 6.4L6.5 3.2L9.5 6.4ZM3.5 9.8L6.5 13L9.5 9.8Z" fill="#d8d8d8"/></svg><div style="left:142px;top:276.19px;width:400px;height:14px;line-height:14px;font-size:11px;color:#161616;font-weight:normal;white-space:nowrap;">0,0</div><div style="left:230px;top:275px;width:56px;height:15px;background:#575757;border-top:2px solid #0c0c0c;border-left:2px solid #0c0c0c;border-bottom:1px solid #5e5e5e"></div><div style="left:286px;top:275px;width:13px;height:16px;background:#474747;border-right:1px solid #121212;border-bottom:1px solid #121212"></div><svg style="left:286px;top:275px" width="13" height="16"><path d="M3.5 6.4L6.5 3.2L9.5 6.4ZM3.5 9.8L6.5 13L9.5 9.8Z" fill="#d8d8d8"/></svg><div style="left:234px;top:276.19px;width:400px;height:14px;line-height:14px;font-size:11px;color:#161616;font-weight:normal;white-space:nowrap;">0,0</div><div style="left:309px;top:275px;width:41px;height:15px;background:#575757;border-top:2px solid #0c0c0c;border-left:2px solid #0c0c0c;border-bottom:1px solid #5e5e5e"></div><div style="left:350px;top:275px;width:13px;height:16px;background:#474747;border-right:1px solid #121212;border-bottom:1px solid #121212"></div><svg style="left:350px;top:275px" width="13" height="16"><path d="M3.5 6.4L6.5 3.2L9.5 6.4ZM3.5 9.8L6.5 13L9.5 9.8Z" fill="#d8d8d8"/></svg><div style="left:313px;top:276.19px;width:400px;height:14px;line-height:14px;font-size:11px;color:#161616;font-weight:normal;white-space:nowrap;">0,5</div><div style="left:32px;top:295.19px;width:100px;height:14px;line-height:14px;font-size:11px;color:#dadada;font-weight:normal;white-space:nowrap;text-align:right;">Tilt</div><div style="left:138px;top:295px;width:55px;height:15px;background:#575757;border-top:2px solid #0c0c0c;border-left:2px solid #0c0c0c;border-bottom:1px solid #5e5e5e"></div><div style="left:193px;top:295px;width:13px;height:16px;background:#474747;border-right:1px solid #121212;border-bottom:1px solid #121212"></div><svg style="left:193px;top:295px" width="13" height="16"><path d="M3.5 6.4L6.5 3.2L9.5 6.4ZM3.5 9.8L6.5 13L9.5 9.8Z" fill="#d8d8d8"/></svg><div style="left:142px;top:296.19px;width:400px;height:14px;line-height:14px;font-size:11px;color:#e6e6e6;font-weight:normal;white-space:nowrap;">0,0</div><div style="left:230px;top:295px;width:56px;height:15px;background:#575757;border-top:2px solid #0c0c0c;border-left:2px solid #0c0c0c;border-bottom:1px solid #5e5e5e"></div><div style="left:286px;top:295px;width:13px;height:16px;background:#474747;border-right:1px solid #121212;border-bottom:1px solid #121212"></div><svg style="left:286px;top:295px" width="13" height="16"><path d="M3.5 6.4L6.5 3.2L9.5 6.4ZM3.5 9.8L6.5 13L9.5 9.8Z" fill="#d8d8d8"/></svg><div style="left:234px;top:296.19px;width:400px;height:14px;line-height:14px;font-size:11px;color:#e6e6e6;font-weight:normal;white-space:nowrap;">0,0</div><div style="left:309px;top:295px;width:41px;height:15px;background:#575757;border-top:2px solid #0c0c0c;border-left:2px solid #0c0c0c;border-bottom:1px solid #5e5e5e"></div><div style="left:350px;top:295px;width:13px;height:16px;background:#474747;border-right:1px solid #121212;border-bottom:1px solid #121212"></div><svg style="left:350px;top:295px" width="13" height="16"><path d="M3.5 6.4L6.5 3.2L9.5 6.4ZM3.5 9.8L6.5 13L9.5 9.8Z" fill="#d8d8d8"/></svg><div style="left:313px;top:296.19px;width:400px;height:14px;line-height:14px;font-size:11px;color:#e6e6e6;font-weight:normal;white-space:nowrap;">0,5</div><div style="left:210px;top:265px;width:15px;height:15px;background:linear-gradient(#5a8fd6,#3f74bf);border:1px solid #1d2c44"></div><div style="left:208.0px;top:268.04px;width:20px;height:12px;line-height:12px;font-size:10px;color:#c4e2ff;font-weight:normal;white-space:nowrap;text-align:center;">L</div><div style="left:32.69999999999999px;top:317.19px;width:100px;height:14px;line-height:14px;font-size:11px;color:#dadada;font-weight:normal;white-space:nowrap;text-align:right;">Max Overlap</div><div style="left:138px;top:317px;width:55px;height:15px;background:#575757;border-top:2px solid #0c0c0c;border-left:2px solid #0c0c0c;border-bottom:1px solid #5e5e5e"></div><div style="left:193px;top:317px;width:13px;height:16px;background:#474747;border-right:1px solid #121212;border-bottom:1px solid #121212"></div><svg style="left:193px;top:317px" width="13" height="16"><path d="M3.5 6.4L6.5 3.2L9.5 6.4ZM3.5 9.8L6.5 13L9.5 9.8Z" fill="#d8d8d8"/></svg><div style="left:142px;top:318.19px;width:400px;height:14px;line-height:14px;font-size:11px;color:#e6e6e6;font-weight:normal;white-space:nowrap;">0,0</div><div style="left:57px;top:348px;width:311px;height:76px;border:1px solid #0e0e0e"></div><div style="left:63px;top:346px;width:45.15625px;height:5px;background:#444444"></div><div style="left:65px;top:341.69px;width:400px;height:14px;line-height:14px;font-size:11px;color:#dadada;font-weight:normal;white-space:nowrap;">General</div><div style="left:31.400000000000006px;top:362.19px;width:100px;height:14px;line-height:14px;font-size:11px;color:#dadada;font-weight:normal;white-space:nowrap;text-align:right;">Scale %</div><div style="left:138px;top:362px;width:55px;height:15px;background:#575757;border-top:2px solid #0c0c0c;border-left:2px solid #0c0c0c;border-bottom:1px solid #5e5e5e"></div><div style="left:193px;top:362px;width:13px;height:16px;background:#474747;border-right:1px solid #121212;border-bottom:1px solid #121212"></div><svg style="left:193px;top:362px" width="13" height="16"><path d="M3.5 6.4L6.5 3.2L9.5 6.4ZM3.5 9.8L6.5 13L9.5 9.8Z" fill="#d8d8d8"/></svg><div style="left:142px;top:363.19px;width:400px;height:14px;line-height:14px;font-size:11px;color:#e6e6e6;font-weight:normal;white-space:nowrap;">100,0</div><div style="left:188.3px;top:362.19px;width:100px;height:14px;line-height:14px;font-size:11px;color:#dadada;font-weight:normal;white-space:nowrap;text-align:right;">Seed</div><div style="left:294px;top:362px;width:55px;height:15px;background:#575757;border-top:2px solid #0c0c0c;border-left:2px solid #0c0c0c;border-bottom:1px solid #5e5e5e"></div><div style="left:349px;top:362px;width:13px;height:16px;background:#474747;border-right:1px solid #121212;border-bottom:1px solid #121212"></div><svg style="left:349px;top:362px" width="13" height="16"><path d="M3.5 6.4L6.5 3.2L9.5 6.4ZM3.5 9.8L6.5 13L9.5 9.8Z" fill="#d8d8d8"/></svg><div style="left:298px;top:363.19px;width:400px;height:14px;line-height:14px;font-size:11px;color:#e6e6e6;font-weight:normal;white-space:nowrap;">12345</div><div style="left:30.400000000000006px;top:382.19px;width:100px;height:14px;line-height:14px;font-size:11px;color:#dadada;font-weight:normal;white-space:nowrap;text-align:right;">Direction °</div><div style="left:138px;top:382px;width:55px;height:15px;background:#575757;border-top:2px solid #0c0c0c;border-left:2px solid #0c0c0c;border-bottom:1px solid #5e5e5e"></div><div style="left:193px;top:382px;width:13px;height:16px;background:#474747;border-right:1px solid #121212;border-bottom:1px solid #121212"></div><svg style="left:193px;top:382px" width="13" height="16"><path d="M3.5 6.4L6.5 3.2L9.5 6.4ZM3.5 9.8L6.5 13L9.5 9.8Z" fill="#d8d8d8"/></svg><div style="left:142px;top:383.19px;width:400px;height:14px;line-height:14px;font-size:11px;color:#e6e6e6;font-weight:normal;white-space:nowrap;">0,0</div><div style="left:191.3px;top:382.19px;width:100px;height:14px;line-height:14px;font-size:11px;color:#dadada;font-weight:normal;white-space:nowrap;text-align:right;">Offset X</div><div style="left:294px;top:382px;width:55px;height:15px;background:#575757;border-top:2px solid #0c0c0c;border-left:2px solid #0c0c0c;border-bottom:1px solid #5e5e5e"></div><div style="left:349px;top:382px;width:13px;height:16px;background:#474747;border-right:1px solid #121212;border-bottom:1px solid #121212"></div><svg style="left:349px;top:382px" width="13" height="16"><path d="M3.5 6.4L6.5 3.2L9.5 6.4ZM3.5 9.8L6.5 13L9.5 9.8Z" fill="#d8d8d8"/></svg><div style="left:298px;top:383.19px;width:400px;height:14px;line-height:14px;font-size:11px;color:#e6e6e6;font-weight:normal;white-space:nowrap;">0,0</div><div style="left:35.5px;top:402.19px;width:100px;height:14px;line-height:14px;font-size:11px;color:#dadada;font-weight:normal;white-space:nowrap;text-align:right;">Row Offset %</div><div style="left:138px;top:402px;width:55px;height:15px;background:#575757;border-top:2px solid #0c0c0c;border-left:2px solid #0c0c0c;border-bottom:1px solid #5e5e5e"></div><div style="left:193px;top:402px;width:13px;height:16px;background:#474747;border-right:1px solid #121212;border-bottom:1px solid #121212"></div><svg style="left:193px;top:402px" width="13" height="16"><path d="M3.5 6.4L6.5 3.2L9.5 6.4ZM3.5 9.8L6.5 13L9.5 9.8Z" fill="#d8d8d8"/></svg><div style="left:142px;top:403.19px;width:400px;height:14px;line-height:14px;font-size:11px;color:#e6e6e6;font-weight:normal;white-space:nowrap;">20,0</div><div style="left:191.3px;top:402.19px;width:100px;height:14px;line-height:14px;font-size:11px;color:#dadada;font-weight:normal;white-space:nowrap;text-align:right;">Offset Y</div><div style="left:294px;top:402px;width:55px;height:15px;background:#575757;border-top:2px solid #0c0c0c;border-left:2px solid #0c0c0c;border-bottom:1px solid #5e5e5e"></div><div style="left:349px;top:402px;width:13px;height:16px;background:#474747;border-right:1px solid #121212;border-bottom:1px solid #121212"></div><svg style="left:349px;top:402px" width="13" height="16"><path d="M3.5 6.4L6.5 3.2L9.5 6.4ZM3.5 9.8L6.5 13L9.5 9.8Z" fill="#d8d8d8"/></svg><div style="left:298px;top:403.19px;width:400px;height:14px;line-height:14px;font-size:11px;color:#e6e6e6;font-weight:normal;white-space:nowrap;">0,0</div><div style="left:57px;top:434px;width:311px;height:93px;border:1px solid #0e0e0e"></div><div style="left:63px;top:432px;width:139.171875px;height:5px;background:#444444"></div><div style="left:65px;top:427.69px;width:400px;height:14px;line-height:14px;font-size:11px;color:#dadada;font-weight:normal;white-space:nowrap;">Extrude / Bevel / Weld / UV</div><div style="left:62px;top:449px;width:12px;height:12px;background:#595959;border-top:2px solid #0c0c0c;border-left:2px solid #0c0c0c"></div><div style="left:80px;top:449.19px;width:400px;height:14px;line-height:14px;font-size:11px;color:#dadada;font-weight:normal;white-space:nowrap;">Weld</div><div style="left:115px;top:448.19px;width:400px;height:14px;line-height:14px;font-size:11px;color:#dadada;font-weight:normal;white-space:nowrap;">Thr.</div><div style="left:138px;top:448px;width:55px;height:15px;background:#575757;border-top:2px solid #0c0c0c;border-left:2px solid #0c0c0c;border-bottom:1px solid #5e5e5e"></div><div style="left:193px;top:448px;width:13px;height:16px;background:#474747;border-right:1px solid #121212;border-bottom:1px solid #121212"></div><svg style="left:193px;top:448px" width="13" height="16"><path d="M3.5 6.4L6.5 3.2L9.5 6.4ZM3.5 9.8L6.5 13L9.5 9.8Z" fill="#d8d8d8"/></svg><div style="left:142px;top:449.19px;width:400px;height:14px;line-height:14px;font-size:11px;color:#e6e6e6;font-weight:normal;white-space:nowrap;">0,05</div><div style="left:62px;top:469px;width:12px;height:12px;background:#595959;border-top:2px solid #0c0c0c;border-left:2px solid #0c0c0c"></div><svg style="left:62px;top:469px" width="12" height="12"><path d="M3 6L5.3 8.5L9.5 3.2" stroke="#f2f2f2" stroke-width="2" fill="none"/></svg><div style="left:80px;top:469.19px;width:400px;height:14px;line-height:14px;font-size:11px;color:#dadada;font-weight:normal;white-space:nowrap;">Extrude</div><div style="left:121px;top:468.19px;width:400px;height:14px;line-height:14px;font-size:11px;color:#dadada;font-weight:normal;white-space:nowrap;">H.</div><div style="left:138px;top:468px;width:55px;height:15px;background:#575757;border-top:2px solid #0c0c0c;border-left:2px solid #0c0c0c;border-bottom:1px solid #5e5e5e"></div><div style="left:193px;top:468px;width:13px;height:16px;background:#474747;border-right:1px solid #121212;border-bottom:1px solid #121212"></div><svg style="left:193px;top:468px" width="13" height="16"><path d="M3.5 6.4L6.5 3.2L9.5 6.4ZM3.5 9.8L6.5 13L9.5 9.8Z" fill="#d8d8d8"/></svg><div style="left:142px;top:469.19px;width:400px;height:14px;line-height:14px;font-size:11px;color:#e6e6e6;font-weight:normal;white-space:nowrap;">1,0</div><div style="left:62px;top:489px;width:12px;height:12px;background:#595959;border-top:2px solid #0c0c0c;border-left:2px solid #0c0c0c"></div><svg style="left:62px;top:489px" width="12" height="12"><path d="M3 6L5.3 8.5L9.5 3.2" stroke="#f2f2f2" stroke-width="2" fill="none"/></svg><div style="left:80px;top:489.19px;width:400px;height:14px;line-height:14px;font-size:11px;color:#dadada;font-weight:normal;white-space:nowrap;">Bevel</div><div style="left:121px;top:488.19px;width:400px;height:14px;line-height:14px;font-size:11px;color:#dadada;font-weight:normal;white-space:nowrap;">H.</div><div style="left:138px;top:488px;width:55px;height:15px;background:#575757;border-top:2px solid #0c0c0c;border-left:2px solid #0c0c0c;border-bottom:1px solid #5e5e5e"></div><div style="left:193px;top:488px;width:13px;height:16px;background:#474747;border-right:1px solid #121212;border-bottom:1px solid #121212"></div><svg style="left:193px;top:488px" width="13" height="16"><path d="M3.5 6.4L6.5 3.2L9.5 6.4ZM3.5 9.8L6.5 13L9.5 9.8Z" fill="#d8d8d8"/></svg><div style="left:142px;top:489.19px;width:400px;height:14px;line-height:14px;font-size:11px;color:#e6e6e6;font-weight:normal;white-space:nowrap;">0,5</div><div style="left:26px;top:509.19px;width:100px;height:14px;line-height:14px;font-size:11px;color:#161616;font-weight:normal;white-space:nowrap;text-align:right;">Outline</div><div style="left:138px;top:508px;width:55px;height:15px;background:#575757;border-top:2px solid #0c0c0c;border-left:2px solid #0c0c0c;border-bottom:1px solid #5e5e5e"></div><div style="left:193px;top:508px;width:13px;height:16px;background:#474747;border-right:1px solid #121212;border-bottom:1px solid #121212"></div><svg style="left:193px;top:508px" width="13" height="16"><path d="M3.5 6.4L6.5 3.2L9.5 6.4ZM3.5 9.8L6.5 13L9.5 9.8Z" fill="#d8d8d8"/></svg><div style="left:142px;top:509.19px;width:400px;height:14px;line-height:14px;font-size:11px;color:#161616;font-weight:normal;white-space:nowrap;">0,5</div><div style="left:210px;top:498px;width:15px;height:15px;background:linear-gradient(#5a8fd6,#3f74bf);border:1px solid #1d2c44"></div><div style="left:208.0px;top:501.04px;width:20px;height:12px;line-height:12px;font-size:10px;color:#c4e2ff;font-weight:normal;white-space:nowrap;text-align:center;">L</div><div style="left:229px;top:449px;width:12px;height:12px;background:#595959;border-top:2px solid #0c0c0c;border-left:2px solid #0c0c0c"></div><svg style="left:229px;top:449px" width="12" height="12"><path d="M3 6L5.3 8.5L9.5 3.2" stroke="#f2f2f2" stroke-width="2" fill="none"/></svg><div style="left:246px;top:449.19px;width:400px;height:14px;line-height:14px;font-size:11px;color:#dadada;font-weight:normal;white-space:nowrap;">Random Flip Mapping U</div><div style="left:229px;top:469px;width:12px;height:12px;background:#595959;border-top:2px solid #0c0c0c;border-left:2px solid #0c0c0c"></div><svg style="left:229px;top:469px" width="12" height="12"><path d="M3 6L5.3 8.5L9.5 3.2" stroke="#f2f2f2" stroke-width="2" fill="none"/></svg><div style="left:246px;top:469.19px;width:400px;height:14px;line-height:14px;font-size:11px;color:#dadada;font-weight:normal;white-space:nowrap;">Random Flip Mapping V</div><div style="left:229px;top:489px;width:12px;height:12px;background:#595959;border-top:2px solid #0c0c0c;border-left:2px solid #0c0c0c"></div><svg style="left:229px;top:489px" width="12" height="12"><path d="M3 6L5.3 8.5L9.5 3.2" stroke="#f2f2f2" stroke-width="2" fill="none"/></svg><div style="left:246px;top:489.19px;width:400px;height:14px;line-height:14px;font-size:11px;color:#dadada;font-weight:normal;white-space:nowrap;">Random Offset U</div><div style="left:229px;top:509px;width:12px;height:12px;background:#595959;border-top:2px solid #0c0c0c;border-left:2px solid #0c0c0c"></div><svg style="left:229px;top:509px" width="12" height="12"><path d="M3 6L5.3 8.5L9.5 3.2" stroke="#f2f2f2" stroke-width="2" fill="none"/></svg><div style="left:246px;top:509.19px;width:400px;height:14px;line-height:14px;font-size:11px;color:#dadada;font-weight:normal;white-space:nowrap;">Random Offset V</div><div style="left:62.0px;top:533.19px;width:300px;height:14px;line-height:14px;font-size:11px;color:#dadada;font-weight:normal;white-space:nowrap;text-align:center;">Floor Template: &lt; Floor not created &gt;</div><div style="left:57px;top:552px;width:154px;height:21px;background:#474747;border-top:1px solid #5a5a5a;border-left:1px solid #5a5a5a;border-right:1px solid #161616;border-bottom:2px solid #161616"></div><div style="left:37.0px;top:556.19px;width:194px;height:14px;line-height:14px;font-size:11px;color:#dadada;font-weight:normal;white-space:nowrap;text-align:center;">Create</div><div style="left:212px;top:552px;width:155px;height:21px;background:#474747;border-top:1px solid #5a5a5a;border-left:1px solid #5a5a5a;border-right:1px solid #161616;border-bottom:2px solid #161616"></div><div style="left:192.0px;top:556.19px;width:195px;height:14px;line-height:14px;font-size:11px;color:#dadada;font-weight:normal;white-space:nowrap;text-align:center;">Fetch settings</div><div style="left:57px;top:576px;width:154px;height:21px;background:#474747;border-top:1px solid #5a5a5a;border-left:1px solid #5a5a5a;border-right:1px solid #161616;border-bottom:2px solid #161616"></div><div style="left:37.0px;top:580.19px;width:194px;height:14px;line-height:14px;font-size:11px;color:#dadada;font-weight:normal;white-space:nowrap;text-align:center;">Update</div><div style="left:212px;top:576px;width:155px;height:21px;background:#474747;border-top:1px solid #5a5a5a;border-left:1px solid #5a5a5a;border-right:1px solid #161616;border-bottom:2px solid #161616"></div><div style="left:192.0px;top:580.19px;width:195px;height:14px;line-height:14px;font-size:11px;color:#dadada;font-weight:normal;white-space:nowrap;text-align:center;">Interactive Update</div><div style="left:62.0px;top:602.19px;width:300px;height:14px;line-height:14px;font-size:11px;color:#dadada;font-weight:normal;white-space:nowrap;text-align:center;">FloorGenerator Version 1.00</div><div style="left:134px;top:620.19px;width:400px;height:14px;line-height:14px;font-size:11px;color:#dadada;font-weight:normal;white-space:nowrap;">Created by</div><div style="left:192px;top:620.19px;width:400px;height:14px;line-height:14px;font-size:11px;color:#111111;font-weight:normal;white-space:nowrap;text-decoration:underline;">www.cg-source.com</div><div style="left:62.0px;top:640.19px;width:300px;height:14px;line-height:14px;font-size:11px;color:#dadada;font-weight:normal;white-space:nowrap;text-align:center;">The source to HighQuality textures</div><div style="left:1203px;top:47px;width:366px;height:791px;background:#dcdad4;border-top:2px solid #fafaf6;border-left:2px solid #fafaf6;border-right:1px solid #a8a8a0;border-bottom:1px solid #a8a8a0"></div><div style="left:1207px;top:51px;width:359px;height:18px;background:linear-gradient(90deg,#808080,#c0c0c0)"></div><svg style="left:1207px;top:52px" width="18" height="17"><defs><linearGradient id="mx" x1="0" y1="1" x2="1" y2="0"><stop offset="0" stop-color="#1e7a7a"/><stop offset="0.6" stop-color="#3aa0a0"/><stop offset="1" stop-color="#c8ecec"/></linearGradient></defs><rect x="0" y="0" width="18" height="17" fill="url(#mx)"/><path d="M4 3L10 2L14 5.5L12 9L14 12L9 15L4 14L7 11L5 8.5L8 6Z" fill="#0c3c42"/></svg><div style="left:1227px;top:53.19px;width:400px;height:14px;line-height:14px;font-size:11px;color:#d8d4cc;font-weight:bold;white-space:nowrap;letter-spacing:0.3px;">Material Editor - Европейский орех</div><div style="left:1514px;top:53px;width:15px;height:14px;background:#d4d0c8;border-top:1px solid #fff;border-left:1px solid #fff;border-right:1px solid #404040;border-bottom:1px solid #404040"></div><div style="left:1518px;top:61px;width:6px;height:2px;background:#000"></div><div style="left:1530px;top:53px;width:15px;height:14px;background:#d4d0c8;border-top:1px solid #fff;border-left:1px solid #fff;border-right:1px solid #404040;border-bottom:1px solid #404040"></div><div style="left:1534px;top:57px;width:9px;height:8px;border:1px solid #fff;border-top:2px solid #fff"></div><div style="left:1533px;top:56px;width:9px;height:8px;border:1px solid #8a8a8a;border-top:2px solid #8a8a8a"></div><div style="left:1548px;top:53px;width:16px;height:14px;background:#d4d0c8;border-top:1px solid #fff;border-left:1px solid #fff;border-right:1px solid #404040;border-bottom:1px solid #404040"></div><svg style="left:1548px;top:53px" width="16" height="14"><path d="M4.5 3.5L11 10M11 3.5L4.5 10" stroke="#000" stroke-width="1.6"/></svg><div style="left:1207px;top:69px;width:359px;height:19px;background:#d4d0c8"></div><div style="left:1213px;top:72.19px;width:400px;height:14px;line-height:14px;font-size:11px;color:#7c7c7c;font-weight:normal;white-space:nowrap;">Modes</div><div style="left:1255px;top:72.19px;width:400px;height:14px;line-height:14px;font-size:11px;color:#7c7c7c;font-weight:normal;white-space:nowrap;">Material</div><div style="left:1305px;top:72.19px;width:400px;height:14px;line-height:14px;font-size:11px;color:#7c7c7c;font-weight:normal;white-space:nowrap;">Navigation</div><div style="left:1369px;top:72.19px;width:400px;height:14px;line-height:14px;font-size:11px;color:#7c7c7c;font-weight:normal;white-space:nowrap;">Options</div><div style="left:1417px;top:72.19px;width:400px;height:14px;line-height:14px;font-size:11px;color:#7c7c7c;font-weight:normal;white-space:nowrap;">Utilities</div><div style="left:1207px;top:88px;width:359px;height:747px;background:#444444"></div><svg style="left:0;top:0" width="1" height="1"><defs><pattern id="ckp" width="4" height="4" patternUnits="userSpaceOnUse"><rect width="4" height="4" fill="#eeeeee"/><rect width="2" height="2" fill="#777777"/><rect x="2" y="2" width="2" height="2" fill="#777777"/></pattern></defs></svg><div style="left:1211px;top:90px;width:310px;height:203px;background:#050505"></div><svg style="left:0;top:0" width="1" height="1"><defs><linearGradient id="sg" x1="0.15" y1="0.1" x2="0.85" y2="0.9"><stop offset="0" stop-color="#c6c6c6"/><stop offset="0.45" stop-color="#acacac"/><stop offset="1" stop-color="#7c7c7c"/></linearGradient><radialGradient id="bg1" cx="0.4" cy="0.35" r="0.72"><stop offset="0" stop-color="#b49484"/><stop offset="0.3" stop-color="#8e6452"/><stop offset="0.7" stop-color="#6a4838"/><stop offset="1" stop-color="#4a3a32"/></radialGradient></defs></svg><div style="left:1215px;top:95px;width:48px;height:47px;background:#7b7b7b;border:1px solid #bdbdbd"></div><svg style="left:1215px;top:95px" width="48" height="47"><circle cx="25" cy="24.5" r="20.8" fill="#a4a4a4"/><circle cx="24.4" cy="23.9" r="20" fill="#565656"/><ellipse cx="21.6" cy="21.2" rx="16.4" ry="20" transform="rotate(45 21.6 21.2)" fill="url(#sg)"/></svg><div style="left:1266px;top:95px;width:48px;height:47px;background:#7b7b7b;border:1px solid #bdbdbd"></div><svg style="left:1266px;top:95px" width="48" height="47"><circle cx="25" cy="24.5" r="20.8" fill="#a4a4a4"/><circle cx="24.4" cy="23.9" r="20" fill="#565656"/><ellipse cx="21.6" cy="21.2" rx="16.4" ry="20" transform="rotate(45 21.6 21.2)" fill="url(#sg)"/></svg><div style="left:1317px;top:95px;width:48px;height:47px;background:#7b7b7b;border:1px solid #bdbdbd"></div><svg style="left:1317px;top:95px" width="48" height="47"><circle cx="25" cy="24.5" r="20.8" fill="#a4a4a4"/><circle cx="24.4" cy="23.9" r="20" fill="#565656"/><ellipse cx="21.6" cy="21.2" rx="16.4" ry="20" transform="rotate(45 21.6 21.2)" fill="url(#sg)"/></svg><div style="left:1368px;top:95px;width:48px;height:47px;background:#7b7b7b;border:1px solid #bdbdbd"></div><svg style="left:1368px;top:95px" width="48" height="47"><circle cx="25" cy="24.5" r="20.8" fill="#a4a4a4"/><circle cx="24.4" cy="23.9" r="20" fill="#565656"/><ellipse cx="21.6" cy="21.2" rx="16.4" ry="20" transform="rotate(45 21.6 21.2)" fill="url(#sg)"/></svg><div style="left:1419px;top:95px;width:48px;height:47px;background:#7b7b7b;border:1px solid #bdbdbd"></div><svg style="left:1419px;top:95px" width="48" height="47"><circle cx="25" cy="24.5" r="20.8" fill="#a4a4a4"/><circle cx="24.4" cy="23.9" r="20" fill="#565656"/><ellipse cx="21.6" cy="21.2" rx="16.4" ry="20" transform="rotate(45 21.6 21.2)" fill="url(#sg)"/></svg><div style="left:1470px;top:95px;width:48px;height:47px;background:#7b7b7b;border:1px solid #bdbdbd"></div><svg style="left:1470px;top:95px" width="48" height="47"><circle cx="25" cy="24.5" r="20.8" fill="#a4a4a4"/><circle cx="24.4" cy="23.9" r="20" fill="#565656"/><ellipse cx="21.6" cy="21.2" rx="16.4" ry="20" transform="rotate(45 21.6 21.2)" fill="url(#sg)"/></svg><div style="left:1215px;top:145px;width:48px;height:47px;background:#7b7b7b;border:1px solid #bdbdbd"></div><svg style="left:1215px;top:145px" width="48" height="47"><circle cx="25" cy="24.5" r="20.8" fill="#a4a4a4"/><circle cx="24.4" cy="23.9" r="20" fill="#565656"/><ellipse cx="21.6" cy="21.2" rx="16.4" ry="20" transform="rotate(45 21.6 21.2)" fill="url(#sg)"/></svg><div style="left:1266px;top:145px;width:48px;height:47px;background:#7b7b7b;border:1px solid #bdbdbd"></div><svg style="left:1266px;top:145px" width="48" height="47"><circle cx="25" cy="24.5" r="20.8" fill="#a4a4a4"/><circle cx="24.4" cy="23.9" r="20" fill="#565656"/><ellipse cx="21.6" cy="21.2" rx="16.4" ry="20" transform="rotate(45 21.6 21.2)" fill="url(#sg)"/></svg><div style="left:1317px;top:145px;width:48px;height:47px;background:#7b7b7b;border:1px solid #bdbdbd"></div><svg style="left:1317px;top:145px" width="48" height="47"><circle cx="25" cy="24.5" r="20.8" fill="#a4a4a4"/><circle cx="24.4" cy="23.9" r="20" fill="#565656"/><ellipse cx="21.6" cy="21.2" rx="16.4" ry="20" transform="rotate(45 21.6 21.2)" fill="url(#sg)"/></svg><div style="left:1368px;top:145px;width:48px;height:47px;background:#7b7b7b;border:1px solid #bdbdbd"></div><svg style="left:1368px;top:145px" width="48" height="47"><circle cx="25" cy="24.5" r="20.8" fill="#a4a4a4"/><circle cx="24.4" cy="23.9" r="20" fill="#565656"/><ellipse cx="21.6" cy="21.2" rx="16.4" ry="20" transform="rotate(45 21.6 21.2)" fill="url(#sg)"/></svg><div style="left:1419px;top:145px;width:48px;height:47px;background:#7b7b7b;border:1px solid #bdbdbd"></div><svg style="left:1419px;top:145px" width="48" height="47"><circle cx="25" cy="24.5" r="20.8" fill="#a4a4a4"/><circle cx="24.4" cy="23.9" r="20" fill="#565656"/><ellipse cx="21.6" cy="21.2" rx="16.4" ry="20" transform="rotate(45 21.6 21.2)" fill="url(#sg)"/></svg><div style="left:1470px;top:145px;width:48px;height:47px;background:#7b7b7b;border:1px solid #bdbdbd"></div><svg style="left:1470px;top:145px" width="48" height="47"><circle cx="25" cy="24.5" r="20.8" fill="#a4a4a4"/><circle cx="24.4" cy="23.9" r="20" fill="#565656"/><ellipse cx="21.6" cy="21.2" rx="16.4" ry="20" transform="rotate(45 21.6 21.2)" fill="url(#sg)"/></svg><div style="left:1213px;top:193px;width:52px;height:51px;background:#7a7a7a;border:2px solid #f4f4f4"></div><svg style="left:1213px;top:193px" width="52" height="51"><circle cx="26.5" cy="25.5" r="20.8" fill="#8a7e78"/><circle cx="26" cy="25" r="19.8" fill="url(#bg1)"/><path d="M3 11L11 3M49 11L41 3M3 40L11 48M49 40L41 48" stroke="#f0f0f0" stroke-width="1.5"/></svg><div style="left:1266px;top:195px;width:48px;height:47px;background:#7b7b7b;border:1px solid #bdbdbd"></div><svg style="left:1266px;top:195px" width="48" height="47"><circle cx="25" cy="24.5" r="20.8" fill="#a4a4a4"/><circle cx="24.4" cy="23.9" r="20" fill="#565656"/><ellipse cx="21.6" cy="21.2" rx="16.4" ry="20" transform="rotate(45 21.6 21.2)" fill="url(#sg)"/></svg><div style="left:1317px;top:195px;width:48px;height:47px;background:#7b7b7b;border:1px solid #bdbdbd"></div><svg style="left:1317px;top:195px" width="48" height="47"><circle cx="25" cy="24.5" r="20.8" fill="#a4a4a4"/><circle cx="24.4" cy="23.9" r="20" fill="#565656"/><ellipse cx="21.6" cy="21.2" rx="16.4" ry="20" transform="rotate(45 21.6 21.2)" fill="url(#sg)"/></svg><div style="left:1368px;top:195px;width:48px;height:47px;background:#7b7b7b;border:1px solid #bdbdbd"></div><svg style="left:1368px;top:195px" width="48" height="47"><circle cx="25" cy="24.5" r="20.8" fill="#a4a4a4"/><circle cx="24.4" cy="23.9" r="20" fill="#565656"/><ellipse cx="21.6" cy="21.2" rx="16.4" ry="20" transform="rotate(45 21.6 21.2)" fill="url(#sg)"/></svg><div style="left:1419px;top:195px;width:48px;height:47px;background:#7b7b7b;border:1px solid #bdbdbd"></div><svg style="left:1419px;top:195px" width="48" height="47"><circle cx="25" cy="24.5" r="20.8" fill="#a4a4a4"/><circle cx="24.4" cy="23.9" r="20" fill="#565656"/><ellipse cx="21.6" cy="21.2" rx="16.4" ry="20" transform="rotate(45 21.6 21.2)" fill="url(#sg)"/></svg><div style="left:1470px;top:195px;width:48px;height:47px;background:#7b7b7b;border:1px solid #bdbdbd"></div><svg style="left:1470px;top:195px" width="48" height="47"><circle cx="25" cy="24.5" r="20.8" fill="#a4a4a4"/><circle cx="24.4" cy="23.9" r="20" fill="#565656"/><ellipse cx="21.6" cy="21.2" rx="16.4" ry="20" transform="rotate(45 21.6 21.2)" fill="url(#sg)"/></svg><div style="left:1215px;top:245px;width:48px;height:47px;background:#7b7b7b;border:1px solid #bdbdbd"></div><svg style="left:1215px;top:245px" width="48" height="47"><circle cx="25" cy="24.5" r="20.8" fill="#a4a4a4"/><circle cx="24.4" cy="23.9" r="20" fill="#565656"/><ellipse cx="21.6" cy="21.2" rx="16.4" ry="20" transform="rotate(45 21.6 21.2)" fill="url(#sg)"/></svg><div style="left:1266px;top:245px;width:48px;height:47px;background:#7b7b7b;border:1px solid #bdbdbd"></div><svg style="left:1266px;top:245px" width="48" height="47"><circle cx="25" cy="24.5" r="20.8" fill="#a4a4a4"/><circle cx="24.4" cy="23.9" r="20" fill="#565656"/><ellipse cx="21.6" cy="21.2" rx="16.4" ry="20" transform="rotate(45 21.6 21.2)" fill="url(#sg)"/></svg><div style="left:1317px;top:245px;width:48px;height:47px;background:#7b7b7b;border:1px solid #bdbdbd"></div><svg style="left:1317px;top:245px" width="48" height="47"><circle cx="25" cy="24.5" r="20.8" fill="#a4a4a4"/><circle cx="24.4" cy="23.9" r="20" fill="#565656"/><ellipse cx="21.6" cy="21.2" rx="16.4" ry="20" transform="rotate(45 21.6 21.2)" fill="url(#sg)"/></svg><div style="left:1368px;top:245px;width:48px;height:47px;background:#7b7b7b;border:1px solid #bdbdbd"></div><svg style="left:1368px;top:245px" width="48" height="47"><circle cx="25" cy="24.5" r="20.8" fill="#a4a4a4"/><circle cx="24.4" cy="23.9" r="20" fill="#565656"/><ellipse cx="21.6" cy="21.2" rx="16.4" ry="20" transform="rotate(45 21.6 21.2)" fill="url(#sg)"/></svg><div style="left:1419px;top:245px;width:48px;height:47px;background:#7b7b7b;border:1px solid #bdbdbd"></div><svg style="left:1419px;top:245px" width="48" height="47"><circle cx="25" cy="24.5" r="20.8" fill="#a4a4a4"/><circle cx="24.4" cy="23.9" r="20" fill="#565656"/><ellipse cx="21.6" cy="21.2" rx="16.4" ry="20" transform="rotate(45 21.6 21.2)" fill="url(#sg)"/></svg><div style="left:1470px;top:245px;width:48px;height:47px;background:#7b7b7b;border:1px solid #bdbdbd"></div><svg style="left:1470px;top:245px" width="48" height="47"><circle cx="25" cy="24.5" r="20.8" fill="#a4a4a4"/><circle cx="24.4" cy="23.9" r="20" fill="#565656"/><ellipse cx="21.6" cy="21.2" rx="16.4" ry="20" transform="rotate(45 21.6 21.2)" fill="url(#sg)"/></svg><div style="left:1521px;top:92px;width:16px;height:15px;background:#c8c4bc;border-top:1px solid #f0f0f0;border-left:1px solid #f0f0f0;border-right:1px solid #6a6a6a;border-bottom:1px solid #6a6a6a"></div><svg style="left:1521px;top:92px" width="16" height="15"><path d="M4.0 9.5L8.0 5.5L12.0 9.5Z" fill="#8a8a8a"/></svg><div style="left:1521px;top:279px;width:16px;height:15px;background:#c8c4bc;border-top:1px solid #f0f0f0;border-left:1px solid #f0f0f0;border-right:1px solid #6a6a6a;border-bottom:1px solid #6a6a6a"></div><svg style="left:1521px;top:279px" width="16" height="15"><path d="M4.0 5.5L8.0 9.5L12.0 5.5Z" fill="#8a8a8a"/></svg><div style="left:1212px;top:295px;width:15px;height:15px;background:#c8c4bc;border-top:1px solid #f0f0f0;border-left:1px solid #f0f0f0;border-right:1px solid #6a6a6a;border-bottom:1px solid #6a6a6a"></div><svg style="left:1212px;top:295px" width="15" height="15"><path d="M9.5 3.5L5.5 7.5L9.5 11.5Z" fill="#8a8a8a"/></svg><div style="left:1505px;top:295px;width:15px;height:15px;background:#c8c4bc;border-top:1px solid #f0f0f0;border-left:1px solid #f0f0f0;border-right:1px solid #6a6a6a;border-bottom:1px solid #6a6a6a"></div><svg style="left:1505px;top:295px" width="15" height="15"><path d="M5.5 3.5L9.5 7.5L5.5 11.5Z" fill="#8a8a8a"/></svg><svg style="left:1541px;top:94px" width="22" height="20"><circle cx="10" cy="9" r="8" fill="#e8e8e8"/><circle cx="10" cy="9" r="7" fill="none" stroke="#9a9a9a" stroke-width="1"/><circle cx="8" cy="7" r="3" fill="#fff"/><path d="M17 18L21 14V18Z" fill="#f0f0f0"/></svg><div style="left:1540px;top:118px;width:22px;height:22px;background:#4a7cc4;border:1px solid #1c2c48"></div><svg style="left:1540px;top:118px" width="22" height="22"><circle cx="10" cy="10" r="6.5" fill="#dde2ea"/><circle cx="9" cy="9" r="3" fill="#fff"/><path d="M14 16L18 12L19 17Z" fill="#e8eef8"/></svg><svg style="left:1544px;top:145px" width="14" height="14"><rect width="14" height="14" fill="url(#ckp)"/></svg><svg style="left:1543px;top:168px" width="20" height="20"><rect x="1" y="1" width="13" height="13" fill="#e4e6ee"/><path d="M15 18L19 14V18Z" fill="#f0f0f0"/></svg><svg style="left:1543px;top:193px" width="16" height="15"><rect x="0" y="0" width="4" height="15" fill="#a8d070"/><rect x="4" y="0" width="4" height="15" fill="#d07878"/><rect x="8" y="0" width="4" height="15" fill="#70b070"/><rect x="12" y="0" width="4" height="15" fill="#a080d0"/></svg><svg style="left:1542px;top:216px" width="22" height="18"><path d="M2 11L10 3L16 9L8 17Z" fill="#e0e0e0"/><path d="M5 8L11 14M8 5L14 11" stroke="#777" stroke-width="1"/><path d="M17 17L21 13V17Z" fill="#f0f0f0"/></svg><svg style="left:1542px;top:240px" width="20" height="18"><circle cx="8" cy="8" r="6.5" fill="url(#ckp)"/><path d="M10 12H17V16H10Z" fill="#cfcfcf"/></svg><svg style="left:1542px;top:264px" width="20" height="20"><circle cx="8" cy="8" r="6.5" fill="url(#ckp)"/><path d="M11 8V18L13.5 15.5L15.5 19L17 18L15 14.5H18Z" fill="#f0f0f0" stroke="#222" stroke-width="0.6"/></svg><svg style="left:1542px;top:288px" width="20" height="20"><path d="M3.5 2V17M3.5 4H9M3.5 10H9M3.5 16H9" stroke="#d0d0d0" stroke-dasharray="1 1"/><circle cx="12" cy="5" r="3.5" fill="url(#ckp)"/><circle cx="12" cy="13" r="3.5" fill="url(#ckp)"/></svg><div style="left:1214px;top:322px;width:1px;height:17px;background:#151515"></div><div style="left:1265px;top:322px;width:1px;height:17px;background:#151515"></div><div style="left:1297px;top:322px;width:1px;height:17px;background:#151515"></div><div style="left:1327px;top:322px;width:1px;height:17px;background:#151515"></div><div style="left:1358px;top:322px;width:1px;height:17px;background:#151515"></div><div style="left:1389px;top:322px;width:1px;height:17px;background:#151515"></div><div style="left:1420px;top:322px;width:1px;height:17px;background:#151515"></div><div style="left:1451px;top:322px;width:1px;height:17px;background:#151515"></div><div style="left:1482px;top:322px;width:1px;height:17px;background:#151515"></div><svg style="left:1217px;top:322px" width="20" height="18"><circle cx="10" cy="10" r="6.5" fill="url(#ckp)"/><path d="M1.5 1.5L7 7" stroke="#f0f0f0" stroke-width="1.6"/></svg><svg style="left:1240px;top:322px" width="20" height="18"><circle cx="5.5" cy="5.5" r="4.2" fill="url(#ckp)"/><path d="M4 15L8 11H17L13 15Z" fill="#dcdcdc"/><path d="M11 4Q15 4 15 8" stroke="#888" fill="none"/></svg><svg style="left:1270px;top:322px" width="20" height="18"><circle cx="6" cy="5" r="4.2" fill="url(#ckp)"/><path d="M9 9H17V17H9Z" fill="#bdbdbd"/><path d="M9 9L11 7H19L17 9Z" fill="#dedede"/><path d="M3 11V15H7" stroke="#888" fill="none"/></svg><svg style="left:1302px;top:323px" width="16" height="16"><path d="M2 2L14 14M14 2L2 14" stroke="#d9707a" stroke-width="1.6"/></svg><svg style="left:1333px;top:322px" width="20" height="18"><circle cx="5" cy="5" r="4" fill="url(#ckp)"/><circle cx="11.5" cy="11.5" r="4.5" fill="#5aa8e0"/><circle cx="11.5" cy="11.5" r="2.5" fill="url(#ckp)" opacity="0.6"/><path d="M10 2H15V6" stroke="#ddd" fill="none"/></svg><svg style="left:1364px;top:322px" width="20" height="18"><circle cx="10" cy="5" r="4" fill="url(#ckp)"/><circle cx="5" cy="13" r="4" fill="url(#ckp)"/><circle cx="15" cy="13" r="4" fill="url(#ckp)"/></svg><svg style="left:1396px;top:323px" width="20" height="18"><circle cx="8" cy="8" r="6.5" fill="url(#ckp)"/><path d="M11 11H17M11 13.5H17M11 16H17" stroke="#e0e0e0" stroke-width="1.4"/></svg><svg style="left:1427px;top:324px" width="20" height="18"><rect x="1" y="1" width="12" height="11" fill="#e6e6ec"/><rect x="4.5" y="3.5" width="5" height="6" rx="1.5" fill="none" stroke="#444"/><path d="M13 16L17 12" stroke="#eee"/></svg><svg style="left:1458px;top:323px" width="20" height="18"><rect x="1" y="1" width="12" height="12" fill="url(#ckp)"/><circle cx="13" cy="11" r="3.5" fill="#d8c070"/><rect x="12" y="13" width="2" height="3" fill="#ddd"/></svg><div style="left:1487px;top:320px;width:23px;height:22px;background:#4a7cc4;border:1px solid #1c2c48"></div><svg style="left:1487px;top:320px" width="23" height="22"><path d="M6 18V6Q6 4 8.5 4Q11 4 11 6V18Z" fill="#bde0f8"/><path d="M16 18V6M13 9L16 4L19 9" stroke="#e8f4ff" stroke-width="1.8" fill="none"/></svg><svg style="left:1513px;top:322px" width="20" height="18"><circle cx="8" cy="8" r="6.5" fill="url(#ckp)"/><path d="M10 16V12L13.5 9L17 12V16Z" fill="#cfcfcf"/></svg><svg style="left:1536px;top:322px" width="20" height="18"><circle cx="8" cy="8" r="6.5" fill="url(#ckp)"/><path d="M9 12H14V10L18 13.5L14 17V15H9Z" fill="#cfcfcf"/></svg><div style="left:1211px;top:354.19px;width:400px;height:14px;line-height:14px;font-size:11px;color:#cfcfcf;font-weight:normal;white-space:nowrap;">Diffuse map:</div><svg style="left:1286px;top:348px" width="20" height="20"><path d="M3 17L12 8" stroke="#ddd" stroke-width="2"/><path d="M11 5L15 9" stroke="#aaa" stroke-width="3"/><circle cx="16" cy="4" r="2.5" fill="#aaa"/></svg><div style="left:1312px;top:348px;width:148px;height:19px;background:#505050;border-top:2px solid #111;border-left:2px solid #111;border-right:1px solid #5a5a5a;border-bottom:1px solid #5a5a5a"></div><div style="left:1317px;top:351.19px;width:400px;height:14px;line-height:14px;font-size:11px;color:#d8d8d8;font-weight:normal;white-space:nowrap;">Map #2070297180</div><div style="left:1445px;top:350px;width:14px;height:16px;background:#d4d0c8;border-top:1px solid #fff;border-left:1px solid #fff;border-right:1px solid #555;border-bottom:1px solid #555"></div><svg style="left:1445px;top:350px" width="14" height="16"><path d="M3.5 6L7 10L10.5 6Z" fill="#000"/></svg><div style="left:1466px;top:348px;width:88px;height:19px;background:#454545;border-top:1px solid #5a5a5a;border-left:1px solid #5a5a5a;border-right:1px solid #161616;border-bottom:1px solid #161616"></div><div style="left:1459.0px;top:351.19px;width:100px;height:14px;line-height:14px;font-size:11px;color:#d8d8d8;font-weight:normal;white-space:nowrap;text-align:center;">MultiTexture</div><div style="left:1216px;top:373px;width:332px;height:341px;border:1px solid #0e0e0e"></div><div style="left:1219px;top:386px;width:326px;height:327px;border-left:1px solid #0e0e0e"></div><div style="left:1216px;top:713px;width:1px;height:120px;background:#0e0e0e"></div><div style="left:1554px;top:373px;width:1px;height:460px;background:#383838"></div><div style="left:1555px;top:373px;width:11px;height:460px;background:#414141"></div><div style="left:1207px;top:833px;width:359px;height:2px;background:#3a3836"></div><div style="left:1223px;top:378px;width:323px;height:16px;border:1px solid #6c6c6c;background:#444"></div><div style="left:1227px;top:386px;width:5px;height:1px;background:#eee"></div><div style="left:1324.0px;top:379.19px;width:120px;height:14px;line-height:14px;font-size:11px;color:#e8e8e8;font-weight:normal;white-space:nowrap;text-align:center;">Parameters</div><div style="left:1223px;top:405px;width:320px;height:82px;border:1px solid #0e0e0e"></div><div style="left:1229px;top:403px;width:45.75px;height:5px;background:#444444"></div><div style="left:1231px;top:398.69px;width:400px;height:14px;line-height:14px;font-size:11px;color:#dadada;font-weight:normal;white-space:nowrap;">Bitmaps</div><div style="left:1239px;top:420px;width:101px;height:23px;background:#474747;border-top:1px solid #5a5a5a;border-left:1px solid #5a5a5a;border-right:1px solid #161616;border-bottom:2px solid #161616"></div><div style="left:1219.0px;top:425.19px;width:141px;height:14px;line-height:14px;font-size:11px;color:#dadada;font-weight:normal;white-space:nowrap;text-align:center;">Manage Textures</div><div style="left:1236px;top:453px;width:21px;height:23px;background:#c2c2c2;border-right:1px solid #222;border-bottom:1px solid #222"></div><div style="left:1261px;top:451px;width:11px;height:11px;border-radius:50%;background:#3a3a3a;border-top:1px solid #151515;border-left:1px solid #151515;border-right:1px solid #555;border-bottom:1px solid #555"></div><div style="left:1264px;top:454px;width:5px;height:5px;border-radius:50%;background:#f4f4f4"></div><div style="left:1278px;top:450.19px;width:400px;height:14px;line-height:14px;font-size:11px;color:#dadada;font-weight:normal;white-space:nowrap;">Use Textures</div><div style="left:1261px;top:468px;width:11px;height:11px;border-radius:50%;background:#3a3a3a;border-top:1px solid #151515;border-left:1px solid #151515;border-right:1px solid #555;border-bottom:1px solid #555"></div><div style="left:1278px;top:467.19px;width:400px;height:14px;line-height:14px;font-size:11px;color:#dadada;font-weight:normal;white-space:nowrap;">Use Color</div><div style="left:1347px;top:413px;width:103px;height:65px;border:1px solid #0e0e0e"></div><div style="left:1353px;top:411px;width:45.125px;height:5px;background:#444444"></div><div style="left:1355px;top:406.69px;width:400px;height:14px;line-height:14px;font-size:11px;color:#dadada;font-weight:normal;white-space:nowrap;">Filtering</div><div style="left:1354px;top:426px;width:11px;height:11px;border-radius:50%;background:#3a3a3a;border-top:1px solid #151515;border-left:1px solid #151515;border-right:1px solid #555;border-bottom:1px solid #555"></div><div style="left:1357px;top:429px;width:5px;height:5px;border-radius:50%;background:#f4f4f4"></div><div style="left:1370px;top:424.19px;width:400px;height:14px;line-height:14px;font-size:11px;color:#dadada;font-weight:normal;white-space:nowrap;">Pyramidal</div><div style="left:1354px;top:444px;width:11px;height:11px;border-radius:50%;background:#3a3a3a;border-top:1px solid #151515;border-left:1px solid #151515;border-right:1px solid #555;border-bottom:1px solid #555"></div><div style="left:1370px;top:442.19px;width:400px;height:14px;line-height:14px;font-size:11px;color:#dadada;font-weight:normal;white-space:nowrap;">Summed Area</div><div style="left:1354px;top:461px;width:11px;height:11px;border-radius:50%;background:#3a3a3a;border-top:1px solid #151515;border-left:1px solid #151515;border-right:1px solid #555;border-bottom:1px solid #555"></div><div style="left:1370px;top:460.19px;width:400px;height:14px;line-height:14px;font-size:11px;color:#dadada;font-weight:normal;white-space:nowrap;">None</div><div style="left:1459.0px;top:414.19px;width:60px;height:14px;line-height:14px;font-size:11px;color:#dadada;font-weight:normal;white-space:nowrap;text-align:center;">Blur</div><div style="left:1463px;top:429px;width:52px;height:15px;background:#575757;border-top:2px solid #0c0c0c;border-left:2px solid #0c0c0c;border-bottom:1px solid #5e5e5e"></div><div style="left:1515px;top:429px;width:13px;height:16px;background:#474747;border-right:1px solid #121212;border-bottom:1px solid #121212"></div><svg style="left:1515px;top:429px" width="13" height="16"><path d="M3.5 6.4L6.5 3.2L9.5 6.4ZM3.5 9.8L6.5 13L9.5 9.8Z" fill="#d8d8d8"/></svg><div style="left:1467px;top:430.19px;width:400px;height:14px;line-height:14px;font-size:11px;color:#e6e6e6;font-weight:normal;white-space:nowrap;">0,54</div><div style="left:1461.0px;top:446.19px;width:60px;height:14px;line-height:14px;font-size:11px;color:#dadada;font-weight:normal;white-space:nowrap;text-align:center;">Rotate</div><div style="left:1463px;top:462px;width:52px;height:15px;background:#575757;border-top:2px solid #0c0c0c;border-left:2px solid #0c0c0c;border-bottom:1px solid #5e5e5e"></div><div style="left:1515px;top:462px;width:13px;height:16px;background:#474747;border-right:1px solid #121212;border-bottom:1px solid #121212"></div><svg style="left:1515px;top:462px" width="13" height="16"><path d="M3.5 6.4L6.5 3.2L9.5 6.4ZM3.5 9.8L6.5 13L9.5 9.8Z" fill="#d8d8d8"/></svg><div style="left:1467px;top:463.19px;width:400px;height:14px;line-height:14px;font-size:11px;color:#e6e6e6;font-weight:normal;white-space:nowrap;">90,0</div><div style="left:1224px;top:495px;width:319px;height:40px;border:1px solid #0e0e0e"></div><div style="left:1230px;top:493px;width:76.34375px;height:5px;background:#444444"></div><div style="left:1232px;top:488.69px;width:400px;height:14px;line-height:14px;font-size:11px;color:#dadada;font-weight:normal;white-space:nowrap;">Randomize by</div><div style="left:1236px;top:511px;width:11px;height:11px;border-radius:50%;background:#3a3a3a;border-top:1px solid #151515;border-left:1px solid #151515;border-right:1px solid #555;border-bottom:1px solid #555"></div><div style="left:1239px;top:514px;width:5px;height:5px;border-radius:50%;background:#f4f4f4"></div><div style="left:1252px;top:510.19px;width:400px;height:14px;line-height:14px;font-size:11px;color:#dadada;font-weight:normal;white-space:nowrap;">Material ID</div><div style="left:1308px;top:511px;width:11px;height:11px;border-radius:50%;background:#3a3a3a;border-top:1px solid #151515;border-left:1px solid #151515;border-right:1px solid #555;border-bottom:1px solid #555"></div><div style="left:1324px;top:510.19px;width:400px;height:14px;line-height:14px;font-size:11px;color:#dadada;font-weight:normal;white-space:nowrap;">Object</div><div style="left:1363px;top:511px;width:11px;height:11px;border-radius:50%;background:#3a3a3a;border-top:1px solid #151515;border-left:1px solid #151515;border-right:1px solid #555;border-bottom:1px solid #555"></div><div style="left:1379px;top:510.19px;width:400px;height:14px;line-height:14px;font-size:11px;color:#dadada;font-weight:normal;white-space:nowrap;">BerconTile</div><div style="left:1436px;top:509.19px;width:400px;height:14px;line-height:14px;font-size:11px;color:#dadada;font-weight:normal;white-space:nowrap;">Seed</div><div style="left:1470px;top:508px;width:52px;height:15px;background:#575757;border-top:2px solid #0c0c0c;border-left:2px solid #0c0c0c;border-bottom:1px solid #5e5e5e"></div><div style="left:1522px;top:508px;width:13px;height:16px;background:#474747;border-right:1px solid #121212;border-bottom:1px solid #121212"></div><svg style="left:1522px;top:508px" width="13" height="16"><path d="M3.5 6.4L6.5 3.2L9.5 6.4ZM3.5 9.8L6.5 13L9.5 9.8Z" fill="#d8d8d8"/></svg><div style="left:1474px;top:509.19px;width:400px;height:14px;line-height:14px;font-size:11px;color:#e6e6e6;font-weight:normal;white-space:nowrap;">17530</div><div style="left:1224px;top:544px;width:319px;height:92px;border:1px solid #0e0e0e"></div><div style="left:1230px;top:542px;width:89.796875px;height:5px;background:#444444"></div><div style="left:1232px;top:537.69px;width:400px;height:14px;line-height:14px;font-size:11px;color:#dadada;font-weight:normal;white-space:nowrap;">Color Adjustment</div><div style="left:1311.0px;top:552.19px;width:80px;height:14px;line-height:14px;font-size:11px;color:#dadada;font-weight:normal;white-space:nowrap;text-align:center;">Gamma</div><div style="left:1387.0px;top:552.19px;width:80px;height:14px;line-height:14px;font-size:11px;color:#dadada;font-weight:normal;white-space:nowrap;text-align:center;">Hue (°)</div><div style="left:1454.0px;top:552.19px;width:80px;height:14px;line-height:14px;font-size:11px;color:#dadada;font-weight:normal;white-space:nowrap;text-align:center;">Saturation</div><div style="left:1188px;top:573.19px;width:120px;height:14px;line-height:14px;font-size:11px;color:#dadada;font-weight:normal;white-space:nowrap;text-align:right;">Overall</div><div style="left:1320px;top:572px;width:52px;height:15px;background:#575757;border-top:2px solid #0c0c0c;border-left:2px solid #0c0c0c;border-bottom:1px solid #5e5e5e"></div><div style="left:1372px;top:572px;width:13px;height:16px;background:#474747;border-right:1px solid #121212;border-bottom:1px solid #121212"></div><svg style="left:1372px;top:572px" width="13" height="16"><path d="M3.5 6.4L6.5 3.2L9.5 6.4ZM3.5 9.8L6.5 13L9.5 9.8Z" fill="#d8d8d8"/></svg><div style="left:1324px;top:573.19px;width:400px;height:14px;line-height:14px;font-size:11px;color:#e6e6e6;font-weight:normal;white-space:nowrap;">1,0</div><div style="left:1395px;top:572px;width:52px;height:15px;background:#575757;border-top:2px solid #0c0c0c;border-left:2px solid #0c0c0c;border-bottom:1px solid #5e5e5e"></div><div style="left:1447px;top:572px;width:13px;height:16px;background:#474747;border-right:1px solid #121212;border-bottom:1px solid #121212"></div><svg style="left:1447px;top:572px" width="13" height="16"><path d="M3.5 6.4L6.5 3.2L9.5 6.4ZM3.5 9.8L6.5 13L9.5 9.8Z" fill="#d8d8d8"/></svg><div style="left:1399px;top:573.19px;width:400px;height:14px;line-height:14px;font-size:11px;color:#e6e6e6;font-weight:normal;white-space:nowrap;">0,0</div><div style="left:1470px;top:572px;width:52px;height:15px;background:#575757;border-top:2px solid #0c0c0c;border-left:2px solid #0c0c0c;border-bottom:1px solid #5e5e5e"></div><div style="left:1522px;top:572px;width:13px;height:16px;background:#474747;border-right:1px solid #121212;border-bottom:1px solid #121212"></div><svg style="left:1522px;top:572px" width="13" height="16"><path d="M3.5 6.4L6.5 3.2L9.5 6.4ZM3.5 9.8L6.5 13L9.5 9.8Z" fill="#d8d8d8"/></svg><div style="left:1474px;top:573.19px;width:400px;height:14px;line-height:14px;font-size:11px;color:#e6e6e6;font-weight:normal;white-space:nowrap;">100,0</div><div style="left:1188px;top:594.19px;width:120px;height:14px;line-height:14px;font-size:11px;color:#dadada;font-weight:normal;white-space:nowrap;text-align:right;">Random (+/-)</div><div style="left:1320px;top:593px;width:52px;height:15px;background:#575757;border-top:2px solid #0c0c0c;border-left:2px solid #0c0c0c;border-bottom:1px solid #5e5e5e"></div><div style="left:1372px;top:593px;width:13px;height:16px;background:#474747;border-right:1px solid #121212;border-bottom:1px solid #121212"></div><svg style="left:1372px;top:593px" width="13" height="16"><path d="M3.5 6.4L6.5 3.2L9.5 6.4ZM3.5 9.8L6.5 13L9.5 9.8Z" fill="#d8d8d8"/></svg><div style="left:1324px;top:594.19px;width:400px;height:14px;line-height:14px;font-size:11px;color:#e6e6e6;font-weight:normal;white-space:nowrap;">0,1</div><div style="left:1395px;top:593px;width:52px;height:15px;background:#575757;border-top:2px solid #0c0c0c;border-left:2px solid #0c0c0c;border-bottom:1px solid #5e5e5e"></div><div style="left:1447px;top:593px;width:13px;height:16px;background:#474747;border-right:1px solid #121212;border-bottom:1px solid #121212"></div><svg style="left:1447px;top:593px" width="13" height="16"><path d="M3.5 6.4L6.5 3.2L9.5 6.4ZM3.5 9.8L6.5 13L9.5 9.8Z" fill="#d8d8d8"/></svg><div style="left:1399px;top:594.19px;width:400px;height:14px;line-height:14px;font-size:11px;color:#e6e6e6;font-weight:normal;white-space:nowrap;">0,0</div><div style="left:1470px;top:593px;width:52px;height:15px;background:#575757;border-top:2px solid #0c0c0c;border-left:2px solid #0c0c0c;border-bottom:1px solid #5e5e5e"></div><div style="left:1522px;top:593px;width:13px;height:16px;background:#474747;border-right:1px solid #121212;border-bottom:1px solid #121212"></div><svg style="left:1522px;top:593px" width="13" height="16"><path d="M3.5 6.4L6.5 3.2L9.5 6.4ZM3.5 9.8L6.5 13L9.5 9.8Z" fill="#d8d8d8"/></svg><div style="left:1474px;top:594.19px;width:400px;height:14px;line-height:14px;font-size:11px;color:#e6e6e6;font-weight:normal;white-space:nowrap;">0,0</div><div style="left:1188px;top:615.19px;width:120px;height:14px;line-height:14px;font-size:11px;color:#dadada;font-weight:normal;white-space:nowrap;text-align:right;">Distribution (%)</div><div style="left:1320px;top:614px;width:52px;height:15px;background:#575757;border-top:2px solid #0c0c0c;border-left:2px solid #0c0c0c;border-bottom:1px solid #5e5e5e"></div><div style="left:1372px;top:614px;width:13px;height:16px;background:#474747;border-right:1px solid #121212;border-bottom:1px solid #121212"></div><svg style="left:1372px;top:614px" width="13" height="16"><path d="M3.5 6.4L6.5 3.2L9.5 6.4ZM3.5 9.8L6.5 13L9.5 9.8Z" fill="#d8d8d8"/></svg><div style="left:1324px;top:615.19px;width:400px;height:14px;line-height:14px;font-size:11px;color:#e6e6e6;font-weight:normal;white-space:nowrap;">50,0</div><div style="left:1395px;top:614px;width:52px;height:15px;background:#575757;border-top:2px solid #0c0c0c;border-left:2px solid #0c0c0c;border-bottom:1px solid #5e5e5e"></div><div style="left:1447px;top:614px;width:13px;height:16px;background:#474747;border-right:1px solid #121212;border-bottom:1px solid #121212"></div><svg style="left:1447px;top:614px" width="13" height="16"><path d="M3.5 6.4L6.5 3.2L9.5 6.4ZM3.5 9.8L6.5 13L9.5 9.8Z" fill="#d8d8d8"/></svg><div style="left:1399px;top:615.19px;width:400px;height:14px;line-height:14px;font-size:11px;color:#e6e6e6;font-weight:normal;white-space:nowrap;">50,0</div><div style="left:1470px;top:614px;width:52px;height:15px;background:#575757;border-top:2px solid #0c0c0c;border-left:2px solid #0c0c0c;border-bottom:1px solid #5e5e5e"></div><div style="left:1522px;top:614px;width:13px;height:16px;background:#474747;border-right:1px solid #121212;border-bottom:1px solid #121212"></div><svg style="left:1522px;top:614px" width="13" height="16"><path d="M3.5 6.4L6.5 3.2L9.5 6.4ZM3.5 9.8L6.5 13L9.5 9.8Z" fill="#d8d8d8"/></svg><div style="left:1474px;top:615.19px;width:400px;height:14px;line-height:14px;font-size:11px;color:#e6e6e6;font-weight:normal;white-space:nowrap;">50,0</div><div style="left:1224px;top:636px;width:320px;height:58px;background:linear-gradient(90deg,#1a1a1a,#262626 60%,#1e1e1e);border:1px solid #e8e8e8"></div><svg style="left:1230px;top:642px" width="70" height="46"><path d="M33.11 32.14A14.5 15 0 1 1 33.11 12.86" stroke="#c5471d" stroke-width="7" fill="none"/><path d="M60.45 23.81A13 15 0 1 1 56.20 11.35" stroke="#c5471d" stroke-width="7" fill="none"/><path d="M48 23.5H61.5" stroke="#c5471d" stroke-width="6.2"/></svg><div style="left:1297px;top:650.99px;width:400px;height:32px;line-height:32px;font-size:26px;color:#f2f2f2;font-weight:bold;white-space:nowrap;">Source</div><div style="left:1410.0px;top:644.19px;width:140px;height:14px;line-height:14px;font-size:11px;color:#8a8a8a;font-weight:normal;white-space:nowrap;text-align:center;">The source to</div><div style="left:1410.0px;top:658.19px;width:140px;height:14px;line-height:14px;font-size:11px;color:#8a8a8a;font-weight:normal;white-space:nowrap;text-align:center;">HighQuality textures</div><div style="left:1410.0px;top:672.19px;width:140px;height:14px;line-height:14px;font-size:11px;color:#8a8a8a;font-weight:normal;white-space:nowrap;text-align:center;">www.cg-source.com</div><div style="left:1225px;top:698.19px;width:400px;height:14px;line-height:14px;font-size:11px;color:#d8d8d8;font-weight:normal;white-space:nowrap;">MultiTexture Version 2.01</div>
</body></html>
